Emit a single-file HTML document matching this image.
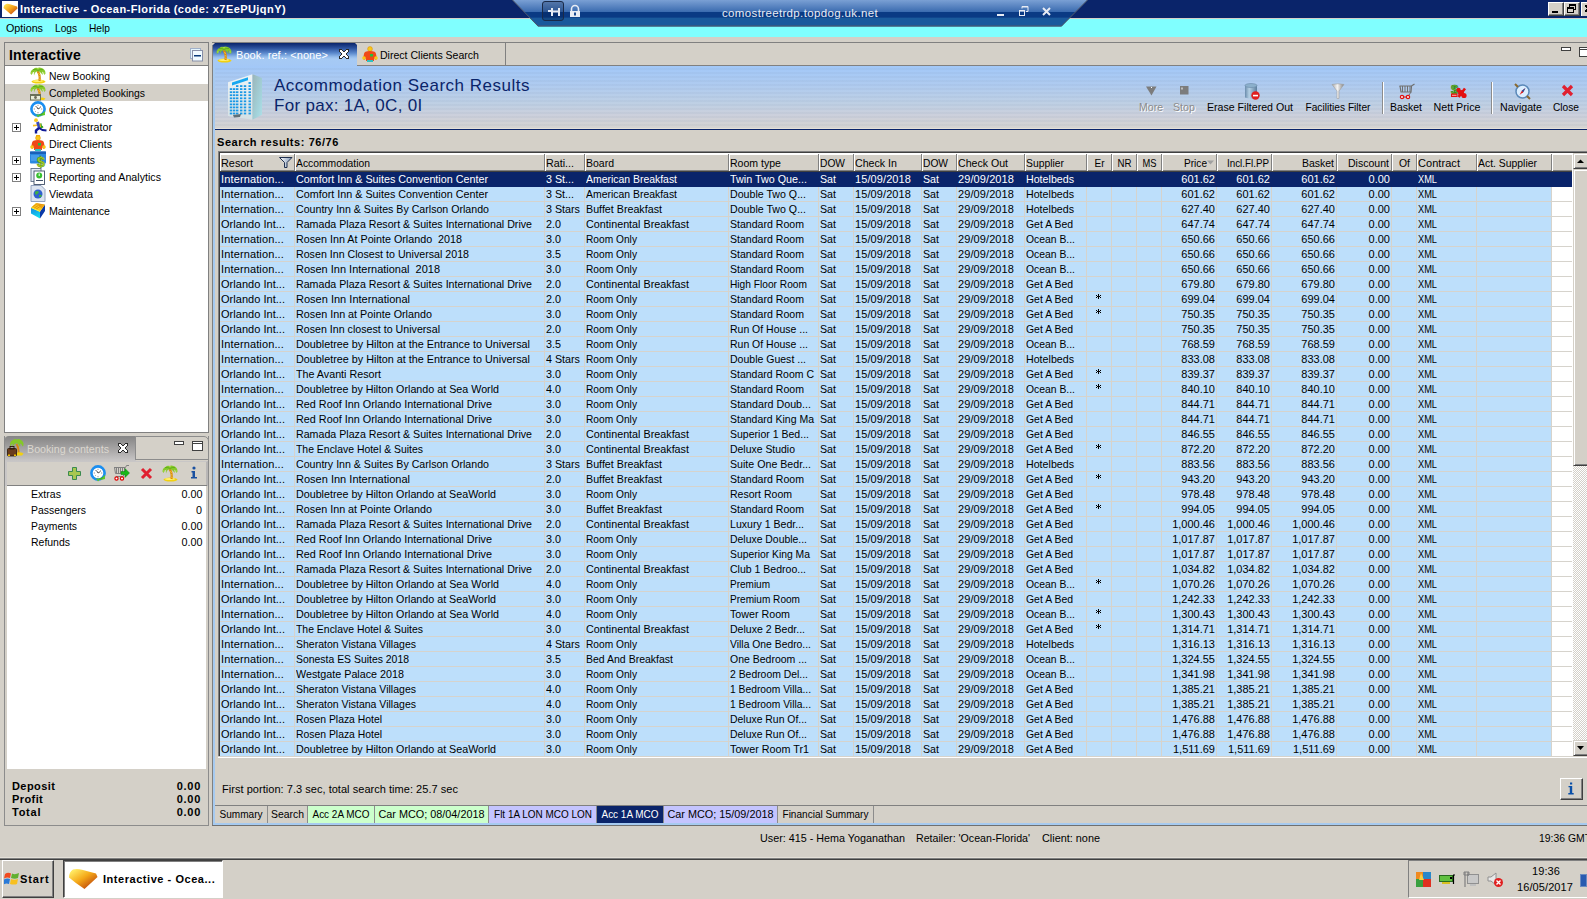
<!DOCTYPE html><html><head><meta charset="utf-8"><style>
*{margin:0;padding:0;box-sizing:border-box}
html,body{width:1587px;height:899px;overflow:hidden;background:#d4d0c8;font-family:"Liberation Sans",sans-serif;font-size:11px;line-height:12px;color:#000}
.a{position:absolute}
.t{position:absolute;white-space:nowrap;font-size:11px;line-height:12px}
.b{font-weight:bold}
</style></head><body><div class="a" style="left:0px;top:0px;width:1587px;height:18px;background:#0a246a"></div><div class="a" style="left:0px;top:18px;width:1587px;height:1px;background:#d4d0c8"></div><svg class="a" style="left:2px;top:1px" width="16" height="16"><rect x="0" y="0" width="16" height="16" fill="#fff"/><defs><linearGradient id="gi" x1="0.1" y1="0.1" x2="0.9" y2="0.9"><stop offset="0" stop-color="#ffe050"/><stop offset="0.5" stop-color="#f4a018"/><stop offset="1" stop-color="#c04410"/></linearGradient></defs><path d="M1.5 7 Q1.5 4 4 3 Q6 2.5 8 3.2 L15 5.5 L15.5 7.5 L9 13.5 Z" fill="url(#gi)"/></svg><div class="t b" style="left:20px;top:3px;color:#fff;letter-spacing:0.427px;">Interactive - Ocean-Florida (code: x7EePUjqnY)</div><div class="a" style="left:1548px;top:2px;width:16px;height:14px;background:#d4d0c8;border-top:1px solid #fff;border-left:1px solid #fff;border-right:1px solid #404040;border-bottom:1px solid #404040;box-shadow:inset -1px -1px #808080"></div><div class="a" style="left:1564px;top:2px;width:16px;height:14px;background:#d4d0c8;border-top:1px solid #fff;border-left:1px solid #fff;border-right:1px solid #404040;border-bottom:1px solid #404040;box-shadow:inset -1px -1px #808080"></div><div class="a" style="left:1552px;top:11px;width:6px;height:2px;background:#000"></div><svg class="a" style="left:1567px;top:4px" width="9" height="9"><rect x="2.5" y="0.5" width="6" height="5" fill="none" stroke="#000"/><rect x="2" y="0" width="7" height="2" fill="#000"/><rect x="0" y="3" width="7" height="6" fill="#d4d0c8"/><rect x="0.5" y="3.5" width="6" height="5" fill="none" stroke="#000"/><rect x="0" y="3" width="7" height="2" fill="#000"/></svg><div class="a" style="left:1581px;top:2px;width:6px;height:14px;background:#d4d0c8;border-top:1px solid #fff;border-left:1px solid #fff"></div><svg class="a" style="left:1585px;top:4px" width="2" height="9" shape-rendering="crispEdges"><rect x="0" y="1" width="2" height="2" fill="#000"/><rect x="1" y="3" width="1" height="1" fill="#000"/><rect x="1" y="5" width="1" height="1" fill="#000"/><rect x="0" y="6" width="2" height="2" fill="#000"/></svg><div class="a" style="left:0px;top:19px;width:1587px;height:18px;background:#80ffff"></div><div class="t " style="left:6px;top:22px;;transform:scaleX(0.9757);transform-origin:left 0;">Options</div><div class="t " style="left:55px;top:22px;;transform:scaleX(0.9221);transform-origin:left 0;">Logs</div><div class="t " style="left:89px;top:22px;;transform:scaleX(0.9282);transform-origin:left 0;">Help</div><svg class="a" style="left:0;top:0" width="1587" height="30"><defs><linearGradient id="rdp" x1="0" y1="0" x2="0" y2="1"><stop offset="0" stop-color="#7aa0d4"/><stop offset="0.44" stop-color="#3c6cb0"/><stop offset="0.455" stop-color="#0a3a84"/><stop offset="0.655" stop-color="#0a3a84"/><stop offset="0.67" stop-color="#1a5a9c"/><stop offset="1" stop-color="#1a5a9c"/></linearGradient></defs><path d="M512.5 0 L1087.5 0 L1061.5 26.5 L538 26.5 Z" fill="url(#rdp)"/><path d="M512.5 0 L538 26 L1061.5 26 L1087.5 0" fill="none" stroke="#505868" stroke-width="1"/><rect x="542.5" y="1.5" width="21" height="19" rx="2.5" fill="rgba(0,20,60,0.25)" stroke="#1a2a48" stroke-width="1"/><path d="M548 11h4M552 8v8M552 11.5h7M559 8v8" stroke="#e8ecf4" stroke-width="2" fill="none"/><path d="M571.5 11V9a3.5 3.5 0 0 1 7 0v2" stroke="#e8ecf4" stroke-width="1.6" fill="none"/><rect x="570" y="11" width="10" height="6" fill="#e8ecf4"/><rect x="574" y="12.5" width="2" height="3" fill="#1a4a90"/><rect x="997" y="14" width="7" height="2" fill="#e8ecf4"/><rect x="1019.5" y="10.5" width="5" height="5" fill="none" stroke="#e8ecf4" stroke-width="1"/><rect x="1019" y="10" width="6" height="1.5" fill="#e8ecf4"/><path d="M1022 8.5V6.5h6v5h-2" fill="none" stroke="#e8ecf4" stroke-width="1"/><rect x="1022" y="6" width="6" height="1.5" fill="#e8ecf4"/><path d="M1043 8l7 7M1050 8l-7 7" stroke="#e8ecf4" stroke-width="2"/></svg><div class="t " style="left:722px;top:7px;color:#e8ecf4;font-size:11.5px;line-height:13px;letter-spacing:0.355px;">comostreetrdp.topdog.uk.net</div><div class="a" style="left:4px;top:42px;width:205px;height:391px;background:#d4d0c8;border:1px solid #808080"></div><div class="t b" style="left:9px;top:48px;font-size:14px;line-height:14px;letter-spacing:0.178px;">Interactive</div><svg class="a" style="left:189px;top:47px" width="15" height="15" viewBox="0 0 15 15"><rect x="1.5" y="1.5" width="10" height="10" fill="#e4f4fc" stroke="#a0b0c8"/><rect x="3.5" y="3.5" width="10" height="10.5" fill="#f0faff" stroke="#8890a8"/><rect x="5" y="8" width="7" height="1.5" fill="#0a3a7a"/></svg><div class="a" style="left:5px;top:65px;width:203px;height:1px;background:#808080"></div><div class="a" style="left:5px;top:66px;width:203px;height:366px;background:#fff"></div><div class="a" style="left:5px;top:84px;width:203px;height:17px;background:#d4d0c8"></div><svg class="a" style="left:30px;top:67px" width="16" height="17" viewBox="0 0 16 17"><ellipse cx="8.5" cy="14.6" rx="7" ry="2" fill="#f2d010"/><ellipse cx="8" cy="14" rx="5" ry="1" fill="#fff070"/><path d="M7.5 4 Q10.5 8 9.5 14" stroke="#d88a10" stroke-width="2.2" fill="none"/><path d="M8 6.5 L10 7.5 M8.8 9.5 L10.3 10.2 M9 12 L10.5 12.5" stroke="#f8c830" stroke-width="0.9"/><path d="M0.5 6.5 Q0.5 3 3.5 2 Q5 0.3 7.5 1 Q9.5 0 11.5 1 Q15.5 2 15.5 6.5 L14.5 8 Q14 5 12 4.5 Q13 6.5 12.5 8 Q11 5 9 4.5 Q8 4 6 4.8 Q4.5 6 4 8.5 Q3.5 6 4.5 4.5 Q2 5 1.5 8Z" fill="#84c828"/><path d="M3 2.5 Q6 2 8 3.5 Q10 2 13 2.5" stroke="#5aa818" stroke-width="0.8" fill="none"/><circle cx="2" cy="6" r="0.8" fill="#b0e050"/><circle cx="14" cy="6" r="0.8" fill="#b0e050"/><circle cx="8" cy="1.5" r="0.8" fill="#b0e050"/></svg><div class="t " style="left:49px;top:70px;;transform:scaleX(0.9409);transform-origin:left 0;">New Booking</div><svg class="a" style="left:30px;top:84px" width="16" height="17" viewBox="0 0 16 17"><path d="M7.5 4 Q10.5 8 9.5 14" stroke="#d88a10" stroke-width="2.2" fill="none"/><path d="M8 6.5 L10 7.5 M8.8 9.5 L10.3 10.2 M9 12 L10.5 12.5" stroke="#f8c830" stroke-width="0.9"/><path d="M0.5 6.5 Q0.5 3 3.5 2 Q5 0.3 7.5 1 Q9.5 0 11.5 1 Q15.5 2 15.5 6.5 L14.5 8 Q14 5 12 4.5 Q13 6.5 12.5 8 Q11 5 9 4.5 Q8 4 6 4.8 Q4.5 6 4 8.5 Q3.5 6 4.5 4.5 Q2 5 1.5 8Z" fill="#84c828"/><path d="M3 2.5 Q6 2 8 3.5 Q10 2 13 2.5" stroke="#5aa818" stroke-width="0.8" fill="none"/><circle cx="2" cy="6" r="0.8" fill="#b0e050"/><circle cx="14" cy="6" r="0.8" fill="#b0e050"/><circle cx="8" cy="1.5" r="0.8" fill="#b0e050"/><path d="M9 14 Q12 13 15.5 14.5 L14 16 L9 16Z" fill="#f2d010"/><rect x="0.5" y="10.5" width="10" height="5.5" fill="#e8ecd8" stroke="#6a7058" stroke-width="1"/><rect x="0.5" y="10.5" width="10" height="1.5" fill="#6a7058"/><circle cx="5.5" cy="13.5" r="1.4" fill="#6a6a58"/></svg><div class="t " style="left:49px;top:87px;;transform:scaleX(0.9457);transform-origin:left 0;">Completed Bookings</div><svg class="a" style="left:30px;top:101px" width="16" height="17" viewBox="0 0 16 17"><circle cx="8" cy="8" r="6.6" fill="#fff" stroke="#1a8ef0" stroke-width="2.6"/><path d="M8 3.8v1M8 11.2v1M3.8 8h1M11.2 8h1M5 5l.6.6M11 5l-.6.6M5 11l.6-.6" stroke="#707070" stroke-width="0.9"/><path d="M8 8 L6.5 5.5 M8 8 L10.5 6.5" stroke="#505050" stroke-width="1"/><path d="M4 12.5 Q8 16 13 12 L14.8 9.5 L15 14 L11 15 L12.5 13.5 Q8 16.5 4 12.5Z" fill="#5cc828"/><path d="M5 12 Q8 15.5 13.5 11.5 L12 14 Q8 16 5 12Z" fill="#48b020"/><path d="M6.5 14 L8 16.5 L10 14.5Z" fill="#5cc828"/></svg><div class="t " style="left:49px;top:104px;;transform:scaleX(0.9604);transform-origin:left 0;">Quick Quotes</div><svg class="a" style="left:28px;top:117px" width="20" height="20" viewBox="0 0 20 20"><circle cx="8" cy="3.2" r="1.9" fill="#f8c820"/><path d="M5 8.6 L9 8.2" stroke="#f8c020" stroke-width="1.6"/><path d="M9.5 5 L11.5 11" stroke="#3a48b8" stroke-width="3"/><path d="M12.5 6.5 L13.2 10.5 L15 9.5" stroke="#30a020" stroke-width="2" fill="none"/><path d="M12 6.5 L12.5 10" stroke="#f0c020" stroke-width="1"/><path d="M11 11 L8 13.5 L8 16.5" stroke="#101a98" stroke-width="2.4" fill="none"/><path d="M11 11 L14.5 13 L18.5 13.5" stroke="#101a98" stroke-width="2" fill="none"/><rect x="8" y="18" width="4" height="2" fill="#f8b800"/></svg><div class="t " style="left:49px;top:121px;;transform:scaleX(0.9723);transform-origin:left 0;">Administrator</div><svg class="a" style="left:12px;top:123px" width="9" height="9" viewBox="0 0 9 9"><rect x="0.5" y="0.5" width="8" height="8" fill="#fff" stroke="#808080"/><path d="M2 4.5h5M4.5 2v5" stroke="#000"/></svg><svg class="a" style="left:30px;top:135px" width="16" height="17" viewBox="0 0 16 17"><circle cx="8" cy="3" r="2.4" fill="#f8c818" stroke="#e09010" stroke-width="0.6"/><path d="M2 8 Q2 5 8 5 Q14 5 14 8 L15 13 Q13 15 12 12 L12 15 H4 V12 Q3 15 1 13Z" fill="#f04818"/><circle cx="2" cy="12" r="1.8" fill="#f8c818"/><circle cx="14" cy="12" r="1.8" fill="#f8c818"/><rect x="8" y="8" width="3" height="2.5" fill="#20c040"/><rect x="5" y="14" width="6" height="2" fill="#30c0c0"/></svg><div class="t " style="left:49px;top:138px;;transform:scaleX(0.9632);transform-origin:left 0;">Direct Clients</div><svg class="a" style="left:30px;top:151px" width="17" height="17" viewBox="0 0 17 17"><rect x="0" y="0.5" width="16" height="12" rx="1" fill="#2a88e0"/><rect x="0" y="0.5" width="16" height="2.5" fill="#1a60b8"/><rect x="1" y="4" width="8" height="6" fill="#5aaaf0" opacity="0.6"/><text x="7" y="16" font-size="14" font-weight="bold" fill="#a8d828" stroke="#6a9a10" stroke-width="0.6" font-family="Liberation Sans">$</text></svg><div class="t " style="left:49px;top:154px;;transform:scaleX(0.9403);transform-origin:left 0;">Payments</div><svg class="a" style="left:12px;top:156px" width="9" height="9" viewBox="0 0 9 9"><rect x="0.5" y="0.5" width="8" height="8" fill="#fff" stroke="#808080"/><path d="M2 4.5h5M4.5 2v5" stroke="#000"/></svg><svg class="a" style="left:30px;top:168px" width="16" height="17" viewBox="0 0 16 17"><rect x="1" y="0.5" width="10" height="13" fill="#e8eef8" stroke="#607088" stroke-width="0.9"/><rect x="4" y="3" width="10.5" height="13.5" fill="#fff" stroke="#405068" stroke-width="0.9"/><circle cx="9.2" cy="7.5" r="3" fill="#3ac030"/><rect x="8.7" y="5.5" width="1" height="2.5" fill="#fff"/><rect x="6" y="12" width="7" height="1" fill="#405068"/></svg><div class="t " style="left:49px;top:171px;;transform:scaleX(0.9690);transform-origin:left 0;">Reporting and Analytics</div><svg class="a" style="left:12px;top:173px" width="9" height="9" viewBox="0 0 9 9"><rect x="0.5" y="0.5" width="8" height="8" fill="#fff" stroke="#808080"/><path d="M2 4.5h5M4.5 2v5" stroke="#000"/></svg><svg class="a" style="left:30px;top:185px" width="16" height="17" viewBox="0 0 16 17"><path d="M1 0.5 H11 L15 4.5 V16.5 H1Z" fill="#dce4f0" stroke="#8898b8" stroke-width="0.9"/><circle cx="8" cy="9" r="4.5" fill="#3060d0"/><path d="M5 7 Q7 5 9 7 Q8 9 6 10 Q5 9 5 7Z M9 10 Q11 9 12 11 Q10 13 9 12Z" fill="#40b040"/></svg><div class="t " style="left:49px;top:188px;;transform:scaleX(0.9764);transform-origin:left 0;">Viewdata</div><svg class="a" style="left:28px;top:201px" width="20" height="20" viewBox="0 0 20 20"><defs><linearGradient id="mb" x1="0" y1="0" x2="0.3" y2="1"><stop offset="0" stop-color="#1a80e0"/><stop offset="1" stop-color="#10d8f0"/></linearGradient></defs><path d="M3 6.5 L12 10.5 L12 17.5 L3 12.5Z" fill="url(#mb)"/><path d="M12 10.5 L17 3.5 L17 10 L12 17.5Z" fill="#0a3aa8"/><path d="M3 6.5 L8 2 L17 3.5 L12 10.5Z" fill="#f8c818"/><path d="M4.5 6 L9 2.8 L16.5 4.2M6 7.3 L10.5 4.2 L15.5 5.5M7.5 8.5 L12 5.5 L14.5 6.8" stroke="#e08010" stroke-width="0.8" fill="none"/><path d="M3 6.5 L12 10.5" stroke="#f8f040" stroke-width="1"/></svg><div class="t " style="left:49px;top:205px;;transform:scaleX(0.9683);transform-origin:left 0;">Maintenance</div><svg class="a" style="left:12px;top:207px" width="9" height="9" viewBox="0 0 9 9"><rect x="0.5" y="0.5" width="8" height="8" fill="#fff" stroke="#808080"/><path d="M2 4.5h5M4.5 2v5" stroke="#000"/></svg><div class="a" style="left:4px;top:436px;width:205px;height:390px;background:#d4d0c8;border:1px solid #8c8c8c;border-top:none"></div><div class="a" style="left:4px;top:436px;width:132px;height:25px;border-radius:5px 0 0 0;background:linear-gradient(#858585,#a8a6a6 55%,#c8c6c6);border-left:1px solid #8c8c8c"></div><div class="a" style="left:135px;top:436px;width:74px;height:24px;border-radius:0 5px 0 0;background:#d4d0c8;border:1px solid #8c8c8c;border-bottom:1px solid #8c8c8c"></div><div class="a" style="left:135px;top:459px;width:74px;height:1px;background:#8c8c8c"></div><svg class="a" style="left:7px;top:438px" width="17" height="19" viewBox="0 0 17 19"><path d="M9.5 6 Q12 10 11.5 16" stroke="#d88a10" stroke-width="2" fill="none"/><path d="M3 7 Q3 3 6 2 Q8 0.5 10 1.5 Q12 0.5 14 2 Q17 3.5 16.5 7.5 L15.5 8.5 Q15 6 13 5.5 Q13.5 7.5 13 9 Q12 6 10.5 5.5 Q9 5 7.5 6 Q6 7.5 5.5 9.5 Q5 7 6 5.5 Q4 6 3.5 8.5Z" fill="#84c828"/><path d="M9 15 Q13 13.5 16.5 15.5 L15 17.5 L9 17.5Z" fill="#f2d010"/><rect x="0.5" y="10.5" width="9" height="7.5" rx="1" fill="#6a3c1c" stroke="#2a1808" stroke-width="0.8"/><rect x="3" y="8.5" width="4" height="2.5" fill="none" stroke="#2a1808" stroke-width="0.9"/><rect x="1" y="16.5" width="2" height="1.5" fill="#f0c000"/><rect x="7" y="16.5" width="2" height="1.5" fill="#f0c000"/></svg><div class="t " style="left:27px;top:443px;color:#dcd8d0;transform:scaleX(0.9717);transform-origin:left 0;">Booking contents</div><svg class="a" style="left:118px;top:443px" width="10" height="10" shape-rendering="crispEdges"><rect x="0" y="0" width="3" height="1" fill="#2a2a2a"/><rect x="7" y="0" width="3" height="1" fill="#2a2a2a"/><rect x="0" y="1" width="1" height="1" fill="#2a2a2a"/><rect x="1" y="1" width="2" height="1" fill="#fff"/><rect x="3" y="1" width="1" height="1" fill="#2a2a2a"/><rect x="6" y="1" width="1" height="1" fill="#2a2a2a"/><rect x="7" y="1" width="2" height="1" fill="#fff"/><rect x="9" y="1" width="1" height="1" fill="#2a2a2a"/><rect x="0" y="2" width="1" height="1" fill="#2a2a2a"/><rect x="1" y="2" width="3" height="1" fill="#fff"/><rect x="4" y="2" width="2" height="1" fill="#2a2a2a"/><rect x="6" y="2" width="3" height="1" fill="#fff"/><rect x="9" y="2" width="1" height="1" fill="#2a2a2a"/><rect x="1" y="3" width="1" height="1" fill="#2a2a2a"/><rect x="2" y="3" width="6" height="1" fill="#fff"/><rect x="8" y="3" width="1" height="1" fill="#2a2a2a"/><rect x="2" y="4" width="1" height="1" fill="#2a2a2a"/><rect x="3" y="4" width="4" height="1" fill="#fff"/><rect x="7" y="4" width="1" height="1" fill="#2a2a2a"/><rect x="2" y="5" width="1" height="1" fill="#2a2a2a"/><rect x="3" y="5" width="4" height="1" fill="#fff"/><rect x="7" y="5" width="1" height="1" fill="#2a2a2a"/><rect x="1" y="6" width="1" height="1" fill="#2a2a2a"/><rect x="2" y="6" width="6" height="1" fill="#fff"/><rect x="8" y="6" width="1" height="1" fill="#2a2a2a"/><rect x="0" y="7" width="1" height="1" fill="#2a2a2a"/><rect x="1" y="7" width="3" height="1" fill="#fff"/><rect x="4" y="7" width="2" height="1" fill="#2a2a2a"/><rect x="6" y="7" width="3" height="1" fill="#fff"/><rect x="9" y="7" width="1" height="1" fill="#2a2a2a"/><rect x="0" y="8" width="1" height="1" fill="#2a2a2a"/><rect x="1" y="8" width="2" height="1" fill="#fff"/><rect x="3" y="8" width="1" height="1" fill="#2a2a2a"/><rect x="6" y="8" width="1" height="1" fill="#2a2a2a"/><rect x="7" y="8" width="2" height="1" fill="#fff"/><rect x="9" y="8" width="1" height="1" fill="#2a2a2a"/><rect x="0" y="9" width="3" height="1" fill="#2a2a2a"/><rect x="7" y="9" width="3" height="1" fill="#2a2a2a"/></svg><svg class="a" style="left:174px;top:441px" width="10" height="4" viewBox="0 0 10 4"><rect x="0.5" y="0.5" width="9" height="3" fill="#fff" stroke="#404040"/></svg><svg class="a" style="left:192px;top:441px" width="11" height="10" viewBox="0 0 11 10"><rect x="0.5" y="0.5" width="10" height="9" fill="#fff" stroke="#404040"/><rect x="0" y="2" width="11" height="1" fill="#404040"/></svg><div class="a" style="left:5px;top:461px;width:203px;height:25px;background:#d4d0c8;border-left:2px solid #c8c6c6;border-top:1px solid #c8c6c6;border-right:2px solid #b8b6b6"></div><div class="a" style="left:7px;top:485px;width:200px;height:1px;background:#808080"></div><svg class="a" style="left:68px;top:467px" width="13" height="13" viewBox="0 0 13 13"><path d="M4.5 0.5h4v4h4v4h-4v4h-4v-4h-4v-4h4z" fill="#a8c850" stroke="#3a8a50" stroke-width="1"/></svg><svg class="a" style="left:90px;top:465px" width="16" height="17" viewBox="0 0 16 17"><circle cx="8" cy="8" r="6.6" fill="#fff" stroke="#1a8ef0" stroke-width="2.6"/><path d="M8 3.8v1M8 11.2v1M3.8 8h1M11.2 8h1M5 5l.6.6M11 5l-.6.6M5 11l.6-.6" stroke="#707070" stroke-width="0.9"/><path d="M8 8 L6.5 5.5 M8 8 L10.5 6.5" stroke="#505050" stroke-width="1"/><path d="M4 12.5 Q8 16 13 12 L14.8 9.5 L15 14 L11 15 L12.5 13.5 Q8 16.5 4 12.5Z" fill="#5cc828"/><path d="M5 12 Q8 15.5 13.5 11.5 L12 14 Q8 16 5 12Z" fill="#48b020"/><path d="M6.5 14 L8 16.5 L10 14.5Z" fill="#5cc828"/></svg><svg class="a" style="left:113px;top:464px" width="17" height="17" viewBox="0 0 17 17"><path d="M1 3.5H12.5L13.5 1.5H16" stroke="#808080" stroke-width="1" fill="none"/><path d="M1.5 3.5L2.5 9.5H11.5" stroke="#808080" stroke-width="1" fill="none"/><path d="M3.5 3.5v6M5.5 3.5v6M7.5 3.5v6M9.5 3.5v6M11.5 3.5v6" stroke="#808080" stroke-width="1"/><path d="M11.5 9.5L10 12.5H3" stroke="#808080" fill="none"/><circle cx="3.5" cy="14.5" r="1.6" fill="#fff" stroke="#e00000" stroke-width="1.2"/><circle cx="9" cy="14.5" r="1.6" fill="#fff" stroke="#e00000" stroke-width="1.2"/><path d="M8 7.5h4v-3l4.5 4.5-4.5 4.5v-3H8z" fill="#18b818" stroke="#0a800a" stroke-width="0.5"/></svg><svg class="a" style="left:140px;top:467px" width="13" height="13" viewBox="0 0 13 13"><path d="M2 2l9 9M11 2l-9 9" stroke="#e02030" stroke-width="3"/></svg><svg class="a" style="left:162px;top:465px" width="16" height="17" viewBox="0 0 16 17"><ellipse cx="8.5" cy="14.6" rx="7" ry="2" fill="#f2d010"/><ellipse cx="8" cy="14" rx="5" ry="1" fill="#fff070"/><path d="M7.5 4 Q10.5 8 9.5 14" stroke="#d88a10" stroke-width="2.2" fill="none"/><path d="M8 6.5 L10 7.5 M8.8 9.5 L10.3 10.2 M9 12 L10.5 12.5" stroke="#f8c830" stroke-width="0.9"/><path d="M0.5 6.5 Q0.5 3 3.5 2 Q5 0.3 7.5 1 Q9.5 0 11.5 1 Q15.5 2 15.5 6.5 L14.5 8 Q14 5 12 4.5 Q13 6.5 12.5 8 Q11 5 9 4.5 Q8 4 6 4.8 Q4.5 6 4 8.5 Q3.5 6 4.5 4.5 Q2 5 1.5 8Z" fill="#84c828"/><path d="M3 2.5 Q6 2 8 3.5 Q10 2 13 2.5" stroke="#5aa818" stroke-width="0.8" fill="none"/><circle cx="2" cy="6" r="0.8" fill="#b0e050"/><circle cx="14" cy="6" r="0.8" fill="#b0e050"/><circle cx="8" cy="1.5" r="0.8" fill="#b0e050"/></svg><svg class="a" style="left:190px;top:466px" width="8" height="13" viewBox="0 0 8 13"><circle cx="4" cy="2" r="1.6" fill="#1a50a0"/><path d="M1.5 5h3.5v6h2v1.5h-6V11h1.5V6.5h-1z" fill="#1a50a0"/></svg><div class="a" style="left:7px;top:486px;width:199px;height:283px;background:#fff"></div><div class="t " style="left:31px;top:488px;;transform:scaleX(0.9619);transform-origin:left 0;">Extras</div><div class="t " style="right:1385px;top:488px;text-align:right;;transform:scaleX(0.9803);transform-origin:right 0;">0.00</div><div class="t " style="left:31px;top:504px;;transform:scaleX(0.9467);transform-origin:left 0;">Passengers</div><div class="t " style="right:1385px;top:504px;text-align:right;;transform:scaleX(0.9796);transform-origin:right 0;">0</div><div class="t " style="left:31px;top:520px;;transform:scaleX(0.9403);transform-origin:left 0;">Payments</div><div class="t " style="right:1385px;top:520px;text-align:right;;transform:scaleX(0.9803);transform-origin:right 0;">0.00</div><div class="t " style="left:31px;top:536px;;transform:scaleX(0.9516);transform-origin:left 0;">Refunds</div><div class="t " style="right:1385px;top:536px;text-align:right;;transform:scaleX(0.9803);transform-origin:right 0;">0.00</div><div class="t b" style="left:12px;top:780px;;letter-spacing:0.422px;">Deposit</div><div class="t b" style="right:1386px;top:780px;text-align:right;;letter-spacing:0.720px;">0.00</div><div class="t b" style="left:12px;top:793px;;letter-spacing:0.411px;">Profit</div><div class="t b" style="right:1386px;top:793px;text-align:right;;letter-spacing:0.720px;">0.00</div><div class="t b" style="left:12px;top:806px;;letter-spacing:0.746px;">Total</div><div class="t b" style="right:1386px;top:806px;text-align:right;;letter-spacing:0.720px;">0.00</div><div class="a" style="left:212px;top:42px;width:1375px;height:1px;background:#808080"></div><div class="a" style="left:212px;top:43px;width:1375px;height:23px;background:#d4d0c8"></div><div class="a" style="left:505px;top:65px;width:1082px;height:1px;background:#808080"></div><div class="a" style="left:356px;top:43px;width:150px;height:23px;background:#d4d0c8;border-right:1px solid #808080;border-bottom:1px solid #808080"></div><svg class="a" style="left:362px;top:46px" width="16" height="17" viewBox="0 0 16 17"><circle cx="8" cy="3" r="2.4" fill="#f8c818" stroke="#e09010" stroke-width="0.6"/><path d="M2 8 Q2 5 8 5 Q14 5 14 8 L15 13 Q13 15 12 12 L12 15 H4 V12 Q3 15 1 13Z" fill="#f04818"/><circle cx="2" cy="12" r="1.8" fill="#f8c818"/><circle cx="14" cy="12" r="1.8" fill="#f8c818"/><rect x="8" y="8" width="3" height="2.5" fill="#20c040"/><rect x="5" y="14" width="6" height="2" fill="#30c0c0"/></svg><div class="t " style="left:380px;top:49px;;transform:scaleX(0.9581);transform-origin:left 0;">Direct Clients Search</div><svg class="a" style="left:1561px;top:47px" width="10" height="4" viewBox="0 0 10 4"><rect x="0.5" y="0.5" width="9" height="3" fill="#fff" stroke="#404040"/></svg><svg class="a" style="left:1579px;top:47px" width="8" height="10" viewBox="0 0 8 10"><rect x="0.5" y="0.5" width="10" height="9" fill="#fff" stroke="#404040"/><rect x="0" y="2" width="11" height="1" fill="#404040"/></svg><div class="a" style="left:212px;top:43px;width:145px;height:23px;clip-path:polygon(0 3px,3px 0,calc(100% - 2px) 0,100% 2px,100% 100%,0 100%);background:linear-gradient(90deg,#808080 0,#808080 1px,transparent 1px),linear-gradient(#0a246a 0px,#2a509c 5px,#5a88cc 10px,#94bcec 14px,#a6caf4 16px,#a4c8f6 23px)"></div><svg class="a" style="left:216px;top:46px" width="16" height="17" viewBox="0 0 16 17"><ellipse cx="8.5" cy="14.6" rx="7" ry="2" fill="#f2d010"/><ellipse cx="8" cy="14" rx="5" ry="1" fill="#fff070"/><path d="M7.5 4 Q10.5 8 9.5 14" stroke="#d88a10" stroke-width="2.2" fill="none"/><path d="M8 6.5 L10 7.5 M8.8 9.5 L10.3 10.2 M9 12 L10.5 12.5" stroke="#f8c830" stroke-width="0.9"/><path d="M0.5 6.5 Q0.5 3 3.5 2 Q5 0.3 7.5 1 Q9.5 0 11.5 1 Q15.5 2 15.5 6.5 L14.5 8 Q14 5 12 4.5 Q13 6.5 12.5 8 Q11 5 9 4.5 Q8 4 6 4.8 Q4.5 6 4 8.5 Q3.5 6 4.5 4.5 Q2 5 1.5 8Z" fill="#84c828"/><path d="M3 2.5 Q6 2 8 3.5 Q10 2 13 2.5" stroke="#5aa818" stroke-width="0.8" fill="none"/><circle cx="2" cy="6" r="0.8" fill="#b0e050"/><circle cx="14" cy="6" r="0.8" fill="#b0e050"/><circle cx="8" cy="1.5" r="0.8" fill="#b0e050"/></svg><div class="t " style="left:236px;top:49px;color:#fff;letter-spacing:0.082px;">Book. ref.: &lt;none&gt;</div><svg class="a" style="left:339px;top:49px" width="10" height="10" shape-rendering="crispEdges"><rect x="0" y="0" width="3" height="1" fill="#2a2a2a"/><rect x="7" y="0" width="3" height="1" fill="#2a2a2a"/><rect x="0" y="1" width="1" height="1" fill="#2a2a2a"/><rect x="1" y="1" width="2" height="1" fill="#fff"/><rect x="3" y="1" width="1" height="1" fill="#2a2a2a"/><rect x="6" y="1" width="1" height="1" fill="#2a2a2a"/><rect x="7" y="1" width="2" height="1" fill="#fff"/><rect x="9" y="1" width="1" height="1" fill="#2a2a2a"/><rect x="0" y="2" width="1" height="1" fill="#2a2a2a"/><rect x="1" y="2" width="3" height="1" fill="#fff"/><rect x="4" y="2" width="2" height="1" fill="#2a2a2a"/><rect x="6" y="2" width="3" height="1" fill="#fff"/><rect x="9" y="2" width="1" height="1" fill="#2a2a2a"/><rect x="1" y="3" width="1" height="1" fill="#2a2a2a"/><rect x="2" y="3" width="6" height="1" fill="#fff"/><rect x="8" y="3" width="1" height="1" fill="#2a2a2a"/><rect x="2" y="4" width="1" height="1" fill="#2a2a2a"/><rect x="3" y="4" width="4" height="1" fill="#fff"/><rect x="7" y="4" width="1" height="1" fill="#2a2a2a"/><rect x="2" y="5" width="1" height="1" fill="#2a2a2a"/><rect x="3" y="5" width="4" height="1" fill="#fff"/><rect x="7" y="5" width="1" height="1" fill="#2a2a2a"/><rect x="1" y="6" width="1" height="1" fill="#2a2a2a"/><rect x="2" y="6" width="6" height="1" fill="#fff"/><rect x="8" y="6" width="1" height="1" fill="#2a2a2a"/><rect x="0" y="7" width="1" height="1" fill="#2a2a2a"/><rect x="1" y="7" width="3" height="1" fill="#fff"/><rect x="4" y="7" width="2" height="1" fill="#2a2a2a"/><rect x="6" y="7" width="3" height="1" fill="#fff"/><rect x="9" y="7" width="1" height="1" fill="#2a2a2a"/><rect x="0" y="8" width="1" height="1" fill="#2a2a2a"/><rect x="1" y="8" width="2" height="1" fill="#fff"/><rect x="3" y="8" width="1" height="1" fill="#2a2a2a"/><rect x="6" y="8" width="1" height="1" fill="#2a2a2a"/><rect x="7" y="8" width="2" height="1" fill="#fff"/><rect x="9" y="8" width="1" height="1" fill="#2a2a2a"/><rect x="0" y="9" width="3" height="1" fill="#2a2a2a"/><rect x="7" y="9" width="3" height="1" fill="#2a2a2a"/></svg><div class="a" style="left:212px;top:46px;width:1px;height:780px;background:#808080"></div><div class="a" style="left:213px;top:66px;width:2px;height:759px;background:#a6caf0"></div><div class="a" style="left:215px;top:66px;width:1372px;height:63px;background:repeating-linear-gradient(rgba(255,255,255,0) 0px,rgba(255,255,255,0) 2px,rgba(110,130,160,0.07) 2px,rgba(110,130,160,0.07) 4px),linear-gradient(#a2c8f8 0%,#afcbf0 30%,#bfd0e4 60%,#ccd0dc 78%,#d6d4d0 100%)"></div><div class="a" style="left:215px;top:128px;width:1372px;height:1px;background:#e4e0d8"></div><div class="a" style="left:215px;top:129px;width:1372px;height:1px;background:#0a246a"></div><svg class="a" style="left:227px;top:73px" width="36" height="48" viewBox="0 0 36 48"><defs><linearGradient id="bld" x1="0" x2="0" y1="0" y2="1"><stop offset="0" stop-color="#eef4f6"/><stop offset="1" stop-color="#d4e0e4"/></linearGradient><linearGradient id="bld2" x1="0" x2="1" y1="0" y2="1"><stop offset="0" stop-color="#9ab4b8"/><stop offset="0.7" stop-color="#a4d4dc"/><stop offset="1" stop-color="#b0e0e8"/></linearGradient></defs><path d="M1 9.3 L25.5 1.2 L25.5 46.7 L1 43Z" fill="url(#bld)"/><path d="M25.5 1.2 L35 5 L35 41.7 L25.5 46.7Z" fill="url(#bld2)"/><path d="M5 9.5 L21 4.2 L21 7.2 L5 12.5Z" fill="#18a8f0"/><rect x="2.8" y="39.6" width="2.4" height="1.8" fill="#1a98e6"/><rect x="2.8" y="36.6" width="2.4" height="1.8" fill="#1a98e6"/><rect x="2.8" y="33.5" width="2.4" height="1.8" fill="#1a98e6"/><rect x="2.8" y="30.5" width="2.4" height="1.8" fill="#1a98e6"/><rect x="2.8" y="27.4" width="2.4" height="1.8" fill="#1a98e6"/><rect x="2.8" y="24.4" width="2.4" height="1.8" fill="#1a98e6"/><rect x="2.8" y="21.3" width="2.4" height="1.8" fill="#1a98e6"/><rect x="2.8" y="18.3" width="2.4" height="1.8" fill="#1a98e6"/><rect x="2.8" y="15.2" width="2.4" height="1.8" fill="#1a98e6"/><rect x="5.9" y="39.6" width="2.4" height="1.8" fill="#1a98e6"/><rect x="5.9" y="36.6" width="2.4" height="1.8" fill="#1a98e6"/><rect x="5.9" y="33.5" width="2.4" height="1.8" fill="#1a98e6"/><rect x="5.9" y="30.5" width="2.4" height="1.8" fill="#1a98e6"/><rect x="5.9" y="27.4" width="2.4" height="1.8" fill="#1a98e6"/><rect x="5.9" y="24.4" width="2.4" height="1.8" fill="#1a98e6"/><rect x="5.9" y="21.3" width="2.4" height="1.8" fill="#1a98e6"/><rect x="5.9" y="18.3" width="2.4" height="1.8" fill="#1a98e6"/><rect x="5.9" y="15.2" width="2.4" height="1.8" fill="#1a98e6"/><rect x="9.0" y="39.6" width="2.4" height="1.8" fill="#1a98e6"/><rect x="9.0" y="36.6" width="2.4" height="1.8" fill="#1a98e6"/><rect x="9.0" y="33.5" width="2.4" height="1.8" fill="#1a98e6"/><rect x="9.0" y="30.5" width="2.4" height="1.8" fill="#1a98e6"/><rect x="9.0" y="27.4" width="2.4" height="1.8" fill="#1a98e6"/><rect x="9.0" y="24.4" width="2.4" height="1.8" fill="#1a98e6"/><rect x="9.0" y="21.3" width="2.4" height="1.8" fill="#1a98e6"/><rect x="9.0" y="18.3" width="2.4" height="1.8" fill="#1a98e6"/><rect x="9.0" y="15.2" width="2.4" height="1.8" fill="#1a98e6"/><rect x="9.0" y="12.2" width="2.4" height="1.8" fill="#1a98e6"/><rect x="13.0" y="39.6" width="2.4" height="1.8" fill="#1a98e6"/><rect x="13.0" y="36.6" width="2.4" height="1.8" fill="#1a98e6"/><rect x="13.0" y="33.5" width="2.4" height="1.8" fill="#1a98e6"/><rect x="13.0" y="30.5" width="2.4" height="1.8" fill="#1a98e6"/><rect x="13.0" y="27.4" width="2.4" height="1.8" fill="#1a98e6"/><rect x="13.0" y="24.4" width="2.4" height="1.8" fill="#1a98e6"/><rect x="13.0" y="21.3" width="2.4" height="1.8" fill="#1a98e6"/><rect x="13.0" y="18.3" width="2.4" height="1.8" fill="#1a98e6"/><rect x="13.0" y="15.2" width="2.4" height="1.8" fill="#1a98e6"/><rect x="13.0" y="12.2" width="2.4" height="1.8" fill="#1a98e6"/><rect x="16.8" y="39.6" width="2.4" height="1.8" fill="#1a98e6"/><rect x="16.8" y="36.6" width="2.4" height="1.8" fill="#1a98e6"/><rect x="16.8" y="33.5" width="2.4" height="1.8" fill="#1a98e6"/><rect x="16.8" y="30.5" width="2.4" height="1.8" fill="#1a98e6"/><rect x="16.8" y="27.4" width="2.4" height="1.8" fill="#1a98e6"/><rect x="16.8" y="24.4" width="2.4" height="1.8" fill="#1a98e6"/><rect x="16.8" y="21.3" width="2.4" height="1.8" fill="#1a98e6"/><rect x="16.8" y="18.3" width="2.4" height="1.8" fill="#1a98e6"/><rect x="16.8" y="15.2" width="2.4" height="1.8" fill="#1a98e6"/><rect x="16.8" y="12.2" width="2.4" height="1.8" fill="#1a98e6"/><rect x="21.5" y="39.6" width="2.4" height="1.8" fill="#1a98e6"/><rect x="21.5" y="36.6" width="2.4" height="1.8" fill="#1a98e6"/><rect x="21.5" y="33.5" width="2.4" height="1.8" fill="#1a98e6"/><rect x="21.5" y="30.5" width="2.4" height="1.8" fill="#1a98e6"/><rect x="21.5" y="27.4" width="2.4" height="1.8" fill="#1a98e6"/><rect x="21.5" y="24.4" width="2.4" height="1.8" fill="#1a98e6"/><rect x="21.5" y="21.3" width="2.4" height="1.8" fill="#1a98e6"/><rect x="21.5" y="18.3" width="2.4" height="1.8" fill="#1a98e6"/><rect x="21.5" y="15.2" width="2.4" height="1.8" fill="#1a98e6"/><rect x="21.5" y="12.2" width="2.4" height="1.8" fill="#1a98e6"/><rect x="21.5" y="9.1" width="2.4" height="1.8" fill="#1a98e6"/><path d="M6 42 L14 41 L13 44 L7 44.5Z" fill="#607078"/></svg><div class="t " style="left:274px;top:77px;font-size:17px;line-height:18px;color:#0a246a;letter-spacing:0.504px;">Accommodation Search Results</div><div class="t " style="left:274px;top:97px;font-size:17px;line-height:18px;color:#0a246a;letter-spacing:0.306px;">For pax: 1A, 0C, 0I</div><div class="t" style="left:1091px;width:120px;top:101px;text-align:center;color:#8c8c8c;text-shadow:1px 1px 0 #fff;transform:scaleX(0.9576);transform-origin:center 0">More</div><div class="t" style="left:1124px;width:120px;top:101px;text-align:center;color:#8c8c8c;text-shadow:1px 1px 0 #fff;transform:scaleX(0.9717);transform-origin:center 0">Stop</div><div class="t" style="left:1190px;width:120px;top:101px;text-align:center;transform:scaleX(0.9634);transform-origin:center 0">Erase Filtered Out</div><div class="t" style="left:1278px;width:120px;top:101px;text-align:center;transform:scaleX(0.9246);transform-origin:center 0">Facilities Filter</div><div class="t" style="left:1346px;width:120px;top:101px;text-align:center;transform:scaleX(0.9512);transform-origin:center 0">Basket</div><div class="t" style="left:1397px;width:120px;top:101px;text-align:center;transform:scaleX(0.9731);transform-origin:center 0">Nett Price</div><div class="t" style="left:1461px;width:120px;top:101px;text-align:center;transform:scaleX(0.9673);transform-origin:center 0">Navigate</div><div class="t" style="left:1506px;width:120px;top:101px;text-align:center;transform:scaleX(0.9244);transform-origin:center 0">Close</div><svg class="a" style="left:1146px;top:86px" width="11" height="10" viewBox="0 0 11 10"><path d="M0 0.5h10.5L5.5 9.5z" fill="#7c7c7c"/><rect x="5" y="1" width="1" height="1" fill="#fff"/></svg><svg class="a" style="left:1180px;top:86px" width="9" height="9" viewBox="0 0 9 9"><rect x="0" y="0" width="8.5" height="8.5" fill="#7c7c7c"/><rect x="1.5" y="1.5" width="1" height="2" fill="#fff"/></svg><svg class="a" style="left:1244px;top:83px" width="16" height="17" viewBox="0 0 16 17"><defs><linearGradient id="can" x1="0" x2="1"><stop offset="0" stop-color="#6a8cac"/><stop offset="0.35" stop-color="#b4d0e4"/><stop offset="1" stop-color="#5c7e9e"/></linearGradient></defs><path d="M1 2.5 V14.5 Q7 16.5 13 14.5 V2.5Z" fill="url(#can)"/><ellipse cx="7" cy="2.5" rx="6" ry="2" fill="#8cb0cc" stroke="#6a8aa8" stroke-width="0.6"/><circle cx="11.5" cy="12.5" r="4.2" fill="#e02020"/><rect x="9" y="11.8" width="5" height="1.6" fill="#fff"/></svg><svg class="a" style="left:1331px;top:83px" width="14" height="17" viewBox="0 0 14 17"><defs><linearGradient id="fun" x1="0" x2="1"><stop offset="0" stop-color="#a8a8a8"/><stop offset="0.45" stop-color="#f4f4f4"/><stop offset="1" stop-color="#808080"/></linearGradient></defs><path d="M1 1.5 Q7 0 13 1.5 L8 8 V15.5 H6 V8Z" fill="url(#fun)" stroke="#a0a0a0" stroke-width="0.6"/></svg><div class="a" style="left:1382px;top:82px;width:1px;height:32px;background:#8c8c8c;box-shadow:1px 0 #fff"></div><div class="a" style="left:1491px;top:82px;width:1px;height:32px;background:#8c8c8c;box-shadow:1px 0 #fff"></div><svg class="a" style="left:1399px;top:83px" width="16" height="17" viewBox="0 0 16 17"><path d="M0.5 3 H12.5 L15.5 1" stroke="#707070" fill="none" stroke-width="1.2"/><path d="M1 3 L2 9 H12 L12.5 3" stroke="#707070" fill="none" stroke-width="1.2"/><path d="M3.5 3v6M6 3v6M8.5 3v6M11 3v6" stroke="#707070" stroke-width="1"/><path d="M12 9 L10 12" stroke="#707070"/><circle cx="3" cy="14" r="1.6" fill="#fff" stroke="#e01010" stroke-width="1.3"/><circle cx="9" cy="14" r="1.6" fill="#fff" stroke="#e01010" stroke-width="1.3"/><path d="M4.6 14h2.8" stroke="#e01010"/></svg><svg class="a" style="left:1450px;top:82px" width="17" height="17" viewBox="0 0 17 17"><text x="1" y="11.5" font-size="13" font-weight="bold" fill="#6ab838" stroke="#3a8a18" stroke-width="0.7" font-family="Liberation Sans">$</text><circle cx="8.5" cy="8" r="2.2" fill="#e41010"/><circle cx="14" cy="13.5" r="2.6" fill="#e41010"/><path d="M15 6.5 L8.5 15" stroke="#e41010" stroke-width="2.6"/><circle cx="11" cy="11" r="3" fill="#e41010"/><rect x="1" y="11.5" width="6.5" height="3.5" fill="#e41010"/><rect x="2" y="12.8" width="4.5" height="1" fill="#ffb0b0"/></svg><svg class="a" style="left:1514px;top:83px" width="17" height="17" viewBox="0 0 17 17"><circle cx="8.5" cy="8.5" r="6.5" fill="#dceeff" stroke="#5a88b8" stroke-width="1.5"/><path d="M11.5 5 L9.2 9.2 L5.5 12 L7.8 7.8Z" fill="#e02020"/><path d="M11.5 5 L7.8 7.8 L9.2 9.2Z" fill="#2050a0"/><path d="M1 1 L4 4 M13 13 L16 16" stroke="#8a6a30" stroke-width="2"/></svg><svg class="a" style="left:1561px;top:84px" width="13" height="13" viewBox="0 0 13 13"><path d="M2 2l9 9M11 2l-9 9" stroke="#e02030" stroke-width="3.2"/></svg><div class="t b" style="left:217px;top:136px;;letter-spacing:0.568px;">Search results: 76/76</div><div class="a" style="left:218px;top:151px;width:1369px;height:1px;background:#808080"></div><div class="a" style="left:218px;top:152px;width:1369px;height:1px;background:#404040"></div><div class="a" style="left:218px;top:151px;width:1px;height:606px;background:#808080"></div><div class="a" style="left:219px;top:152px;width:1px;height:604px;background:#404040"></div><div class="a" style="left:218px;top:756px;width:1369px;height:1px;background:#d4d0c8"></div><div class="a" style="left:218px;top:757px;width:1369px;height:1px;background:#fff"></div><div class="a" style="left:220px;top:153px;width:1353px;height:19px;background:#d4d0c8"></div><div class="a" style="left:220px;top:153px;width:1353px;height:2px;background:#fff"></div><div class="a" style="left:220px;top:170px;width:1353px;height:1px;background:#808080"></div><div class="a" style="left:220px;top:171px;width:1353px;height:1px;background:#404040"></div><div class="a" style="left:220px;top:153px;width:1px;height:18px;background:#fff"></div><div class="a" style="left:294px;top:154px;width:1px;height:17px;background:#808080"></div><div class="t" style="left:221px;top:157px;transform:scaleX(0.9875);transform-origin:left 0">Resort</div><div class="a" style="left:295px;top:153px;width:1px;height:18px;background:#fff"></div><div class="a" style="left:544px;top:154px;width:1px;height:17px;background:#808080"></div><div class="t" style="left:296px;top:157px;transform:scaleX(0.9382);transform-origin:left 0">Accommodation</div><div class="a" style="left:545px;top:153px;width:1px;height:18px;background:#fff"></div><div class="a" style="left:584px;top:154px;width:1px;height:17px;background:#808080"></div><div class="t" style="left:546px;top:157px;transform:scaleX(0.9744);transform-origin:left 0">Rati...</div><div class="a" style="left:585px;top:153px;width:1px;height:18px;background:#fff"></div><div class="a" style="left:728px;top:154px;width:1px;height:17px;background:#808080"></div><div class="t" style="left:586px;top:157px;transform:scaleX(0.9537);transform-origin:left 0">Board</div><div class="a" style="left:729px;top:153px;width:1px;height:18px;background:#fff"></div><div class="a" style="left:818px;top:154px;width:1px;height:17px;background:#808080"></div><div class="t" style="left:730px;top:157px;transform:scaleX(0.9586);transform-origin:left 0">Room type</div><div class="a" style="left:819px;top:153px;width:1px;height:18px;background:#fff"></div><div class="a" style="left:853px;top:154px;width:1px;height:17px;background:#808080"></div><div class="t" style="left:820px;top:157px;transform:scaleX(0.9297);transform-origin:left 0">DOW</div><div class="a" style="left:854px;top:153px;width:1px;height:18px;background:#fff"></div><div class="a" style="left:921px;top:154px;width:1px;height:17px;background:#808080"></div><div class="t" style="left:855px;top:157px;transform:scaleX(0.9673);transform-origin:left 0">Check In</div><div class="a" style="left:922px;top:153px;width:1px;height:18px;background:#fff"></div><div class="a" style="left:956px;top:154px;width:1px;height:17px;background:#808080"></div><div class="t" style="left:923px;top:157px;transform:scaleX(0.9297);transform-origin:left 0">DOW</div><div class="a" style="left:957px;top:153px;width:1px;height:18px;background:#fff"></div><div class="a" style="left:1024px;top:154px;width:1px;height:17px;background:#808080"></div><div class="t" style="left:958px;top:157px;transform:scaleX(0.9621);transform-origin:left 0">Check Out</div><div class="a" style="left:1025px;top:153px;width:1px;height:18px;background:#fff"></div><div class="a" style="left:1086px;top:154px;width:1px;height:17px;background:#808080"></div><div class="t" style="left:1026px;top:157px;transform:scaleX(0.9415);transform-origin:left 0">Supplier</div><div class="a" style="left:1087px;top:153px;width:1px;height:18px;background:#fff"></div><div class="a" style="left:1111px;top:154px;width:1px;height:17px;background:#808080"></div><div class="t" style="left:1087px;width:25px;text-align:center;top:157px;transform:scaleX(0.9091);transform-origin:center 0">Er</div><div class="a" style="left:1112px;top:153px;width:1px;height:18px;background:#fff"></div><div class="a" style="left:1136px;top:154px;width:1px;height:17px;background:#808080"></div><div class="t" style="left:1112px;width:25px;text-align:center;top:157px;transform:scaleX(0.8810);transform-origin:center 0">NR</div><div class="a" style="left:1137px;top:153px;width:1px;height:18px;background:#fff"></div><div class="a" style="left:1161px;top:154px;width:1px;height:17px;background:#808080"></div><div class="t" style="left:1137px;width:25px;text-align:center;top:157px;transform:scaleX(0.8485);transform-origin:center 0">MS</div><div class="a" style="left:1162px;top:153px;width:1px;height:18px;background:#fff"></div><div class="a" style="left:1216px;top:154px;width:1px;height:17px;background:#808080"></div><div class="t" style="left:1161px;width:46px;text-align:right;top:157px;transform:scaleX(0.9177);transform-origin:right 0">Price</div><div class="a" style="left:1217px;top:153px;width:1px;height:18px;background:#fff"></div><div class="a" style="left:1271px;top:154px;width:1px;height:17px;background:#808080"></div><div class="t" style="left:1216px;width:53px;text-align:right;top:157px;transform:scaleX(0.8921);transform-origin:right 0">Incl.Fl.PP</div><div class="a" style="left:1272px;top:153px;width:1px;height:18px;background:#fff"></div><div class="a" style="left:1336px;top:154px;width:1px;height:17px;background:#808080"></div><div class="t" style="left:1271px;width:63px;text-align:right;top:157px;transform:scaleX(0.9512);transform-origin:right 0">Basket</div><div class="a" style="left:1337px;top:153px;width:1px;height:18px;background:#fff"></div><div class="a" style="left:1391px;top:154px;width:1px;height:17px;background:#808080"></div><div class="t" style="left:1336px;width:53px;text-align:right;top:157px;transform:scaleX(0.9580);transform-origin:right 0">Discount</div><div class="a" style="left:1392px;top:153px;width:1px;height:18px;background:#fff"></div><div class="a" style="left:1416px;top:154px;width:1px;height:17px;background:#808080"></div><div class="t" style="left:1392px;width:25px;text-align:center;top:157px;transform:scaleX(0.9462);transform-origin:center 0">Of</div><div class="a" style="left:1417px;top:153px;width:1px;height:18px;background:#fff"></div><div class="a" style="left:1476px;top:154px;width:1px;height:17px;background:#808080"></div><div class="t" style="left:1418px;top:157px;letter-spacing:0.053px">Contract</div><div class="a" style="left:1477px;top:153px;width:1px;height:18px;background:#fff"></div><div class="a" style="left:1551px;top:154px;width:1px;height:17px;background:#808080"></div><div class="t" style="left:1478px;top:157px;transform:scaleX(0.9459);transform-origin:left 0">Act. Supplier</div><div class="a" style="left:1552px;top:153px;width:1px;height:18px;background:#fff"></div><svg class="a" style="left:279px;top:157px" width="14" height="11" viewBox="0 0 14 11"><defs><linearGradient id="fn2" x1="0" x2="1"><stop offset="0" stop-color="#fff"/><stop offset="1" stop-color="#8098b8"/></linearGradient></defs><path d="M0.5 0.5 H13 L8 5.5 V10.5 H5.5 V5.5Z" fill="url(#fn2)" stroke="#203050" stroke-width="1"/></svg><svg class="a" style="left:1207px;top:160px" width="7" height="5" viewBox="0 0 7 5"><path d="M0 0.5h7L3.5 4.5z" fill="#a0a0a0"/></svg><div class="a" style="left:220px;top:172px;width:1353px;height:584px;background:#fff"></div><div class="a" style="left:220px;top:172px;width:1332px;height:584px;background:#bddffb"></div><div class="a" style="left:220px;top:201px;width:1353px;height:1px;background:#d6d3cc"></div><div class="a" style="left:220px;top:216px;width:1353px;height:1px;background:#d6d3cc"></div><div class="a" style="left:220px;top:231px;width:1353px;height:1px;background:#d6d3cc"></div><div class="a" style="left:220px;top:246px;width:1353px;height:1px;background:#d6d3cc"></div><div class="a" style="left:220px;top:261px;width:1353px;height:1px;background:#d6d3cc"></div><div class="a" style="left:220px;top:276px;width:1353px;height:1px;background:#d6d3cc"></div><div class="a" style="left:220px;top:291px;width:1353px;height:1px;background:#d6d3cc"></div><div class="a" style="left:220px;top:306px;width:1353px;height:1px;background:#d6d3cc"></div><div class="a" style="left:220px;top:321px;width:1353px;height:1px;background:#d6d3cc"></div><div class="a" style="left:220px;top:336px;width:1353px;height:1px;background:#d6d3cc"></div><div class="a" style="left:220px;top:351px;width:1353px;height:1px;background:#d6d3cc"></div><div class="a" style="left:220px;top:366px;width:1353px;height:1px;background:#d6d3cc"></div><div class="a" style="left:220px;top:381px;width:1353px;height:1px;background:#d6d3cc"></div><div class="a" style="left:220px;top:396px;width:1353px;height:1px;background:#d6d3cc"></div><div class="a" style="left:220px;top:411px;width:1353px;height:1px;background:#d6d3cc"></div><div class="a" style="left:220px;top:426px;width:1353px;height:1px;background:#d6d3cc"></div><div class="a" style="left:220px;top:441px;width:1353px;height:1px;background:#d6d3cc"></div><div class="a" style="left:220px;top:456px;width:1353px;height:1px;background:#d6d3cc"></div><div class="a" style="left:220px;top:471px;width:1353px;height:1px;background:#d6d3cc"></div><div class="a" style="left:220px;top:486px;width:1353px;height:1px;background:#d6d3cc"></div><div class="a" style="left:220px;top:501px;width:1353px;height:1px;background:#d6d3cc"></div><div class="a" style="left:220px;top:516px;width:1353px;height:1px;background:#d6d3cc"></div><div class="a" style="left:220px;top:531px;width:1353px;height:1px;background:#d6d3cc"></div><div class="a" style="left:220px;top:546px;width:1353px;height:1px;background:#d6d3cc"></div><div class="a" style="left:220px;top:561px;width:1353px;height:1px;background:#d6d3cc"></div><div class="a" style="left:220px;top:576px;width:1353px;height:1px;background:#d6d3cc"></div><div class="a" style="left:220px;top:591px;width:1353px;height:1px;background:#d6d3cc"></div><div class="a" style="left:220px;top:606px;width:1353px;height:1px;background:#d6d3cc"></div><div class="a" style="left:220px;top:621px;width:1353px;height:1px;background:#d6d3cc"></div><div class="a" style="left:220px;top:636px;width:1353px;height:1px;background:#d6d3cc"></div><div class="a" style="left:220px;top:651px;width:1353px;height:1px;background:#d6d3cc"></div><div class="a" style="left:220px;top:666px;width:1353px;height:1px;background:#d6d3cc"></div><div class="a" style="left:220px;top:681px;width:1353px;height:1px;background:#d6d3cc"></div><div class="a" style="left:220px;top:696px;width:1353px;height:1px;background:#d6d3cc"></div><div class="a" style="left:220px;top:711px;width:1353px;height:1px;background:#d6d3cc"></div><div class="a" style="left:220px;top:726px;width:1353px;height:1px;background:#d6d3cc"></div><div class="a" style="left:220px;top:741px;width:1353px;height:1px;background:#d6d3cc"></div><div class="a" style="left:220px;top:756px;width:1353px;height:1px;background:#d6d3cc"></div><div class="a" style="left:294px;top:172px;width:1px;height:584px;background:#d6d3cc"></div><div class="a" style="left:544px;top:172px;width:1px;height:584px;background:#d6d3cc"></div><div class="a" style="left:584px;top:172px;width:1px;height:584px;background:#d6d3cc"></div><div class="a" style="left:728px;top:172px;width:1px;height:584px;background:#d6d3cc"></div><div class="a" style="left:818px;top:172px;width:1px;height:584px;background:#d6d3cc"></div><div class="a" style="left:853px;top:172px;width:1px;height:584px;background:#d6d3cc"></div><div class="a" style="left:921px;top:172px;width:1px;height:584px;background:#d6d3cc"></div><div class="a" style="left:956px;top:172px;width:1px;height:584px;background:#d6d3cc"></div><div class="a" style="left:1024px;top:172px;width:1px;height:584px;background:#d6d3cc"></div><div class="a" style="left:1086px;top:172px;width:1px;height:584px;background:#d6d3cc"></div><div class="a" style="left:1111px;top:172px;width:1px;height:584px;background:#d6d3cc"></div><div class="a" style="left:1136px;top:172px;width:1px;height:584px;background:#d6d3cc"></div><div class="a" style="left:1161px;top:172px;width:1px;height:584px;background:#d6d3cc"></div><div class="a" style="left:1216px;top:172px;width:1px;height:584px;background:#d6d3cc"></div><div class="a" style="left:1271px;top:172px;width:1px;height:584px;background:#d6d3cc"></div><div class="a" style="left:1336px;top:172px;width:1px;height:584px;background:#d6d3cc"></div><div class="a" style="left:1391px;top:172px;width:1px;height:584px;background:#d6d3cc"></div><div class="a" style="left:1416px;top:172px;width:1px;height:584px;background:#d6d3cc"></div><div class="a" style="left:1476px;top:172px;width:1px;height:584px;background:#d6d3cc"></div><div class="a" style="left:1551px;top:172px;width:1px;height:584px;background:#d6d3cc"></div><div class="a" style="left:220px;top:172px;width:1353px;height:15px;background:#0a246a"></div><div class="t" style="left:221px;top:173px;color:#fff;letter-spacing:0.132px">Internation...</div><div class="t" style="left:296px;top:173px;color:#fff;transform:scaleX(0.9783);transform-origin:left 0">Comfort Inn &amp; Suites Convention Center</div><div class="t" style="left:546px;top:173px;color:#fff;transform:scaleX(0.9739);transform-origin:left 0">3 St...</div><div class="t" style="left:586px;top:173px;color:#fff;transform:scaleX(0.9481);transform-origin:left 0">American Breakfast</div><div class="t" style="left:730px;top:173px;color:#fff;transform:scaleX(0.9787);transform-origin:left 0">Twin Two Que...</div><div class="t" style="left:820px;top:173px;color:#fff;transform:scaleX(0.9688);transform-origin:left 0">Sat</div><div class="t" style="left:855px;top:173px;color:#fff;letter-spacing:0.094px">15/09/2018</div><div class="t" style="left:923px;top:173px;color:#fff;transform:scaleX(0.9688);transform-origin:left 0">Sat</div><div class="t" style="left:958px;top:173px;color:#fff;letter-spacing:0.094px">29/09/2018</div><div class="t" style="left:1026px;top:173px;color:#fff;transform:scaleX(0.9688);transform-origin:left 0">Hotelbeds</div><div class="t" style="left:1418px;top:173px;color:#fff;transform:scaleX(0.8398);transform-origin:left 0">XML</div><div class="t" style="right:372px;top:173px;text-align:right;color:#fff">601.62</div><div class="t" style="right:317px;top:173px;text-align:right;color:#fff">601.62</div><div class="t" style="right:252px;top:173px;text-align:right;color:#fff">601.62</div><div class="t" style="right:197px;top:173px;text-align:right;color:#fff">0.00</div><div class="t" style="left:221px;top:188px;color:#000;letter-spacing:0.132px">Internation...</div><div class="t" style="left:296px;top:188px;color:#000;transform:scaleX(0.9783);transform-origin:left 0">Comfort Inn &amp; Suites Convention Center</div><div class="t" style="left:546px;top:188px;color:#000;transform:scaleX(0.9739);transform-origin:left 0">3 St...</div><div class="t" style="left:586px;top:188px;color:#000;transform:scaleX(0.9481);transform-origin:left 0">American Breakfast</div><div class="t" style="left:730px;top:188px;color:#000;transform:scaleX(0.9660);transform-origin:left 0">Double Two Q...</div><div class="t" style="left:820px;top:188px;color:#000;transform:scaleX(0.9688);transform-origin:left 0">Sat</div><div class="t" style="left:855px;top:188px;color:#000;letter-spacing:0.094px">15/09/2018</div><div class="t" style="left:923px;top:188px;color:#000;transform:scaleX(0.9688);transform-origin:left 0">Sat</div><div class="t" style="left:958px;top:188px;color:#000;letter-spacing:0.094px">29/09/2018</div><div class="t" style="left:1026px;top:188px;color:#000;transform:scaleX(0.9688);transform-origin:left 0">Hotelbeds</div><div class="t" style="left:1418px;top:188px;color:#000;transform:scaleX(0.8398);transform-origin:left 0">XML</div><div class="t" style="right:372px;top:188px;text-align:right;color:#000">601.62</div><div class="t" style="right:317px;top:188px;text-align:right;color:#000">601.62</div><div class="t" style="right:252px;top:188px;text-align:right;color:#000">601.62</div><div class="t" style="right:197px;top:188px;text-align:right;color:#000">0.00</div><div class="t" style="left:221px;top:203px;color:#000;letter-spacing:0.132px">Internation...</div><div class="t" style="left:296px;top:203px;color:#000;transform:scaleX(0.9653);transform-origin:left 0">Country Inn &amp; Suites By Carlson Orlando</div><div class="t" style="left:546px;top:203px;color:#000;transform:scaleX(0.9753);transform-origin:left 0">3 Stars</div><div class="t" style="left:586px;top:203px;color:#000;transform:scaleX(0.9734);transform-origin:left 0">Buffet Breakfast</div><div class="t" style="left:730px;top:203px;color:#000;transform:scaleX(0.9660);transform-origin:left 0">Double Two Q...</div><div class="t" style="left:820px;top:203px;color:#000;transform:scaleX(0.9688);transform-origin:left 0">Sat</div><div class="t" style="left:855px;top:203px;color:#000;letter-spacing:0.094px">15/09/2018</div><div class="t" style="left:923px;top:203px;color:#000;transform:scaleX(0.9688);transform-origin:left 0">Sat</div><div class="t" style="left:958px;top:203px;color:#000;letter-spacing:0.094px">29/09/2018</div><div class="t" style="left:1026px;top:203px;color:#000;transform:scaleX(0.9688);transform-origin:left 0">Hotelbeds</div><div class="t" style="left:1418px;top:203px;color:#000;transform:scaleX(0.8398);transform-origin:left 0">XML</div><div class="t" style="right:372px;top:203px;text-align:right;color:#000">627.40</div><div class="t" style="right:317px;top:203px;text-align:right;color:#000">627.40</div><div class="t" style="right:252px;top:203px;text-align:right;color:#000">627.40</div><div class="t" style="right:197px;top:203px;text-align:right;color:#000">0.00</div><div class="t" style="left:221px;top:218px;color:#000;letter-spacing:0.029px">Orlando Int...</div><div class="t" style="left:296px;top:218px;color:#000;transform:scaleX(0.9674);transform-origin:left 0">Ramada Plaza Resort &amp; Suites International Drive</div><div class="t" style="left:546px;top:218px;color:#000;transform:scaleX(0.9806);transform-origin:left 0">2.0</div><div class="t" style="left:586px;top:218px;color:#000;transform:scaleX(0.9793);transform-origin:left 0">Continental Breakfast</div><div class="t" style="left:730px;top:218px;color:#000;transform:scaleX(0.9605);transform-origin:left 0">Standard Room</div><div class="t" style="left:820px;top:218px;color:#000;transform:scaleX(0.9688);transform-origin:left 0">Sat</div><div class="t" style="left:855px;top:218px;color:#000;letter-spacing:0.094px">15/09/2018</div><div class="t" style="left:923px;top:218px;color:#000;transform:scaleX(0.9688);transform-origin:left 0">Sat</div><div class="t" style="left:958px;top:218px;color:#000;letter-spacing:0.094px">29/09/2018</div><div class="t" style="left:1026px;top:218px;color:#000;transform:scaleX(0.9486);transform-origin:left 0">Get A Bed</div><div class="t" style="left:1418px;top:218px;color:#000;transform:scaleX(0.8398);transform-origin:left 0">XML</div><div class="t" style="right:372px;top:218px;text-align:right;color:#000">647.74</div><div class="t" style="right:317px;top:218px;text-align:right;color:#000">647.74</div><div class="t" style="right:252px;top:218px;text-align:right;color:#000">647.74</div><div class="t" style="right:197px;top:218px;text-align:right;color:#000">0.00</div><div class="t" style="left:221px;top:233px;color:#000;letter-spacing:0.132px">Internation...</div><div class="t" style="left:296px;top:233px;color:#000;transform:scaleX(0.9764);transform-origin:left 0">Rosen Inn At Pointe Orlando&nbsp; 2018</div><div class="t" style="left:546px;top:233px;color:#000;transform:scaleX(0.9806);transform-origin:left 0">3.0</div><div class="t" style="left:586px;top:233px;color:#000;transform:scaleX(0.9267);transform-origin:left 0">Room Only</div><div class="t" style="left:730px;top:233px;color:#000;transform:scaleX(0.9605);transform-origin:left 0">Standard Room</div><div class="t" style="left:820px;top:233px;color:#000;transform:scaleX(0.9688);transform-origin:left 0">Sat</div><div class="t" style="left:855px;top:233px;color:#000;letter-spacing:0.094px">15/09/2018</div><div class="t" style="left:923px;top:233px;color:#000;transform:scaleX(0.9688);transform-origin:left 0">Sat</div><div class="t" style="left:958px;top:233px;color:#000;letter-spacing:0.094px">29/09/2018</div><div class="t" style="left:1026px;top:233px;color:#000;transform:scaleX(0.9426);transform-origin:left 0">Ocean B...</div><div class="t" style="left:1418px;top:233px;color:#000;transform:scaleX(0.8398);transform-origin:left 0">XML</div><div class="t" style="right:372px;top:233px;text-align:right;color:#000">650.66</div><div class="t" style="right:317px;top:233px;text-align:right;color:#000">650.66</div><div class="t" style="right:252px;top:233px;text-align:right;color:#000">650.66</div><div class="t" style="right:197px;top:233px;text-align:right;color:#000">0.00</div><div class="t" style="left:221px;top:248px;color:#000;letter-spacing:0.132px">Internation...</div><div class="t" style="left:296px;top:248px;color:#000;transform:scaleX(0.9689);transform-origin:left 0">Rosen Inn Closest to Universal 2018</div><div class="t" style="left:546px;top:248px;color:#000;transform:scaleX(0.9806);transform-origin:left 0">3.5</div><div class="t" style="left:586px;top:248px;color:#000;transform:scaleX(0.9267);transform-origin:left 0">Room Only</div><div class="t" style="left:730px;top:248px;color:#000;transform:scaleX(0.9605);transform-origin:left 0">Standard Room</div><div class="t" style="left:820px;top:248px;color:#000;transform:scaleX(0.9688);transform-origin:left 0">Sat</div><div class="t" style="left:855px;top:248px;color:#000;letter-spacing:0.094px">15/09/2018</div><div class="t" style="left:923px;top:248px;color:#000;transform:scaleX(0.9688);transform-origin:left 0">Sat</div><div class="t" style="left:958px;top:248px;color:#000;letter-spacing:0.094px">29/09/2018</div><div class="t" style="left:1026px;top:248px;color:#000;transform:scaleX(0.9426);transform-origin:left 0">Ocean B...</div><div class="t" style="left:1418px;top:248px;color:#000;transform:scaleX(0.8398);transform-origin:left 0">XML</div><div class="t" style="right:372px;top:248px;text-align:right;color:#000">650.66</div><div class="t" style="right:317px;top:248px;text-align:right;color:#000">650.66</div><div class="t" style="right:252px;top:248px;text-align:right;color:#000">650.66</div><div class="t" style="right:197px;top:248px;text-align:right;color:#000">0.00</div><div class="t" style="left:221px;top:263px;color:#000;letter-spacing:0.132px">Internation...</div><div class="t" style="left:296px;top:263px;color:#000;transform:scaleX(0.9977);transform-origin:left 0">Rosen Inn International&nbsp; 2018</div><div class="t" style="left:546px;top:263px;color:#000;transform:scaleX(0.9806);transform-origin:left 0">3.0</div><div class="t" style="left:586px;top:263px;color:#000;transform:scaleX(0.9267);transform-origin:left 0">Room Only</div><div class="t" style="left:730px;top:263px;color:#000;transform:scaleX(0.9605);transform-origin:left 0">Standard Room</div><div class="t" style="left:820px;top:263px;color:#000;transform:scaleX(0.9688);transform-origin:left 0">Sat</div><div class="t" style="left:855px;top:263px;color:#000;letter-spacing:0.094px">15/09/2018</div><div class="t" style="left:923px;top:263px;color:#000;transform:scaleX(0.9688);transform-origin:left 0">Sat</div><div class="t" style="left:958px;top:263px;color:#000;letter-spacing:0.094px">29/09/2018</div><div class="t" style="left:1026px;top:263px;color:#000;transform:scaleX(0.9426);transform-origin:left 0">Ocean B...</div><div class="t" style="left:1418px;top:263px;color:#000;transform:scaleX(0.8398);transform-origin:left 0">XML</div><div class="t" style="right:372px;top:263px;text-align:right;color:#000">650.66</div><div class="t" style="right:317px;top:263px;text-align:right;color:#000">650.66</div><div class="t" style="right:252px;top:263px;text-align:right;color:#000">650.66</div><div class="t" style="right:197px;top:263px;text-align:right;color:#000">0.00</div><div class="t" style="left:221px;top:278px;color:#000;letter-spacing:0.029px">Orlando Int...</div><div class="t" style="left:296px;top:278px;color:#000;transform:scaleX(0.9674);transform-origin:left 0">Ramada Plaza Resort &amp; Suites International Drive</div><div class="t" style="left:546px;top:278px;color:#000;transform:scaleX(0.9806);transform-origin:left 0">2.0</div><div class="t" style="left:586px;top:278px;color:#000;transform:scaleX(0.9793);transform-origin:left 0">Continental Breakfast</div><div class="t" style="left:730px;top:278px;color:#000;transform:scaleX(0.9261);transform-origin:left 0">High Floor Room</div><div class="t" style="left:820px;top:278px;color:#000;transform:scaleX(0.9688);transform-origin:left 0">Sat</div><div class="t" style="left:855px;top:278px;color:#000;letter-spacing:0.094px">15/09/2018</div><div class="t" style="left:923px;top:278px;color:#000;transform:scaleX(0.9688);transform-origin:left 0">Sat</div><div class="t" style="left:958px;top:278px;color:#000;letter-spacing:0.094px">29/09/2018</div><div class="t" style="left:1026px;top:278px;color:#000;transform:scaleX(0.9486);transform-origin:left 0">Get A Bed</div><div class="t" style="left:1418px;top:278px;color:#000;transform:scaleX(0.8398);transform-origin:left 0">XML</div><div class="t" style="right:372px;top:278px;text-align:right;color:#000">679.80</div><div class="t" style="right:317px;top:278px;text-align:right;color:#000">679.80</div><div class="t" style="right:252px;top:278px;text-align:right;color:#000">679.80</div><div class="t" style="right:197px;top:278px;text-align:right;color:#000">0.00</div><div class="t" style="left:221px;top:293px;color:#000;letter-spacing:0.029px">Orlando Int...</div><div class="t" style="left:296px;top:293px;color:#000;letter-spacing:0.011px">Rosen Inn International</div><div class="t" style="left:546px;top:293px;color:#000;transform:scaleX(0.9806);transform-origin:left 0">2.0</div><div class="t" style="left:586px;top:293px;color:#000;transform:scaleX(0.9267);transform-origin:left 0">Room Only</div><div class="t" style="left:730px;top:293px;color:#000;transform:scaleX(0.9605);transform-origin:left 0">Standard Room</div><div class="t" style="left:820px;top:293px;color:#000;transform:scaleX(0.9688);transform-origin:left 0">Sat</div><div class="t" style="left:855px;top:293px;color:#000;letter-spacing:0.094px">15/09/2018</div><div class="t" style="left:923px;top:293px;color:#000;transform:scaleX(0.9688);transform-origin:left 0">Sat</div><div class="t" style="left:958px;top:293px;color:#000;letter-spacing:0.094px">29/09/2018</div><div class="t" style="left:1026px;top:293px;color:#000;transform:scaleX(0.9486);transform-origin:left 0">Get A Bed</div><div class="t" style="left:1418px;top:293px;color:#000;transform:scaleX(0.8398);transform-origin:left 0">XML</div><svg class="a" style="left:1096px;top:294px" width="5" height="5" viewBox="0 0 5 5"><path d="M2 0h1v5H2zM0 1h1v1H0zM4 1h1v1H4zM0 3h1v1H0zM4 3h1v1H4zM1 2h3v1H1z" fill="#000" shape-rendering="crispEdges"/></svg><div class="t" style="right:372px;top:293px;text-align:right;color:#000">699.04</div><div class="t" style="right:317px;top:293px;text-align:right;color:#000">699.04</div><div class="t" style="right:252px;top:293px;text-align:right;color:#000">699.04</div><div class="t" style="right:197px;top:293px;text-align:right;color:#000">0.00</div><div class="t" style="left:221px;top:308px;color:#000;letter-spacing:0.029px">Orlando Int...</div><div class="t" style="left:296px;top:308px;color:#000;transform:scaleX(0.9797);transform-origin:left 0">Rosen Inn at Pointe Orlando</div><div class="t" style="left:546px;top:308px;color:#000;transform:scaleX(0.9806);transform-origin:left 0">3.0</div><div class="t" style="left:586px;top:308px;color:#000;transform:scaleX(0.9267);transform-origin:left 0">Room Only</div><div class="t" style="left:730px;top:308px;color:#000;transform:scaleX(0.9605);transform-origin:left 0">Standard Room</div><div class="t" style="left:820px;top:308px;color:#000;transform:scaleX(0.9688);transform-origin:left 0">Sat</div><div class="t" style="left:855px;top:308px;color:#000;letter-spacing:0.094px">15/09/2018</div><div class="t" style="left:923px;top:308px;color:#000;transform:scaleX(0.9688);transform-origin:left 0">Sat</div><div class="t" style="left:958px;top:308px;color:#000;letter-spacing:0.094px">29/09/2018</div><div class="t" style="left:1026px;top:308px;color:#000;transform:scaleX(0.9486);transform-origin:left 0">Get A Bed</div><div class="t" style="left:1418px;top:308px;color:#000;transform:scaleX(0.8398);transform-origin:left 0">XML</div><svg class="a" style="left:1096px;top:309px" width="5" height="5" viewBox="0 0 5 5"><path d="M2 0h1v5H2zM0 1h1v1H0zM4 1h1v1H4zM0 3h1v1H0zM4 3h1v1H4zM1 2h3v1H1z" fill="#000" shape-rendering="crispEdges"/></svg><div class="t" style="right:372px;top:308px;text-align:right;color:#000">750.35</div><div class="t" style="right:317px;top:308px;text-align:right;color:#000">750.35</div><div class="t" style="right:252px;top:308px;text-align:right;color:#000">750.35</div><div class="t" style="right:197px;top:308px;text-align:right;color:#000">0.00</div><div class="t" style="left:221px;top:323px;color:#000;letter-spacing:0.029px">Orlando Int...</div><div class="t" style="left:296px;top:323px;color:#000;transform:scaleX(0.9692);transform-origin:left 0">Rosen Inn closest to Universal</div><div class="t" style="left:546px;top:323px;color:#000;transform:scaleX(0.9806);transform-origin:left 0">2.0</div><div class="t" style="left:586px;top:323px;color:#000;transform:scaleX(0.9267);transform-origin:left 0">Room Only</div><div class="t" style="left:730px;top:323px;color:#000;transform:scaleX(0.9519);transform-origin:left 0">Run Of House ...</div><div class="t" style="left:820px;top:323px;color:#000;transform:scaleX(0.9688);transform-origin:left 0">Sat</div><div class="t" style="left:855px;top:323px;color:#000;letter-spacing:0.094px">15/09/2018</div><div class="t" style="left:923px;top:323px;color:#000;transform:scaleX(0.9688);transform-origin:left 0">Sat</div><div class="t" style="left:958px;top:323px;color:#000;letter-spacing:0.094px">29/09/2018</div><div class="t" style="left:1026px;top:323px;color:#000;transform:scaleX(0.9486);transform-origin:left 0">Get A Bed</div><div class="t" style="left:1418px;top:323px;color:#000;transform:scaleX(0.8398);transform-origin:left 0">XML</div><div class="t" style="right:372px;top:323px;text-align:right;color:#000">750.35</div><div class="t" style="right:317px;top:323px;text-align:right;color:#000">750.35</div><div class="t" style="right:252px;top:323px;text-align:right;color:#000">750.35</div><div class="t" style="right:197px;top:323px;text-align:right;color:#000">0.00</div><div class="t" style="left:221px;top:338px;color:#000;letter-spacing:0.132px">Internation...</div><div class="t" style="left:296px;top:338px;color:#000;transform:scaleX(0.9813);transform-origin:left 0">Doubletree by Hilton at the Entrance to Universal</div><div class="t" style="left:546px;top:338px;color:#000;transform:scaleX(0.9806);transform-origin:left 0">3.5</div><div class="t" style="left:586px;top:338px;color:#000;transform:scaleX(0.9267);transform-origin:left 0">Room Only</div><div class="t" style="left:730px;top:338px;color:#000;transform:scaleX(0.9519);transform-origin:left 0">Run Of House ...</div><div class="t" style="left:820px;top:338px;color:#000;transform:scaleX(0.9688);transform-origin:left 0">Sat</div><div class="t" style="left:855px;top:338px;color:#000;letter-spacing:0.094px">15/09/2018</div><div class="t" style="left:923px;top:338px;color:#000;transform:scaleX(0.9688);transform-origin:left 0">Sat</div><div class="t" style="left:958px;top:338px;color:#000;letter-spacing:0.094px">29/09/2018</div><div class="t" style="left:1026px;top:338px;color:#000;transform:scaleX(0.9426);transform-origin:left 0">Ocean B...</div><div class="t" style="left:1418px;top:338px;color:#000;transform:scaleX(0.8398);transform-origin:left 0">XML</div><div class="t" style="right:372px;top:338px;text-align:right;color:#000">768.59</div><div class="t" style="right:317px;top:338px;text-align:right;color:#000">768.59</div><div class="t" style="right:252px;top:338px;text-align:right;color:#000">768.59</div><div class="t" style="right:197px;top:338px;text-align:right;color:#000">0.00</div><div class="t" style="left:221px;top:353px;color:#000;letter-spacing:0.132px">Internation...</div><div class="t" style="left:296px;top:353px;color:#000;transform:scaleX(0.9813);transform-origin:left 0">Doubletree by Hilton at the Entrance to Universal</div><div class="t" style="left:546px;top:353px;color:#000;transform:scaleX(0.9753);transform-origin:left 0">4 Stars</div><div class="t" style="left:586px;top:353px;color:#000;transform:scaleX(0.9267);transform-origin:left 0">Room Only</div><div class="t" style="left:730px;top:353px;color:#000;transform:scaleX(0.9560);transform-origin:left 0">Double Guest ...</div><div class="t" style="left:820px;top:353px;color:#000;transform:scaleX(0.9688);transform-origin:left 0">Sat</div><div class="t" style="left:855px;top:353px;color:#000;letter-spacing:0.094px">15/09/2018</div><div class="t" style="left:923px;top:353px;color:#000;transform:scaleX(0.9688);transform-origin:left 0">Sat</div><div class="t" style="left:958px;top:353px;color:#000;letter-spacing:0.094px">29/09/2018</div><div class="t" style="left:1026px;top:353px;color:#000;transform:scaleX(0.9688);transform-origin:left 0">Hotelbeds</div><div class="t" style="left:1418px;top:353px;color:#000;transform:scaleX(0.8398);transform-origin:left 0">XML</div><div class="t" style="right:372px;top:353px;text-align:right;color:#000">833.08</div><div class="t" style="right:317px;top:353px;text-align:right;color:#000">833.08</div><div class="t" style="right:252px;top:353px;text-align:right;color:#000">833.08</div><div class="t" style="right:197px;top:353px;text-align:right;color:#000">0.00</div><div class="t" style="left:221px;top:368px;color:#000;letter-spacing:0.029px">Orlando Int...</div><div class="t" style="left:296px;top:368px;color:#000;transform:scaleX(0.9744);transform-origin:left 0">The Avanti Resort</div><div class="t" style="left:546px;top:368px;color:#000;transform:scaleX(0.9806);transform-origin:left 0">3.0</div><div class="t" style="left:586px;top:368px;color:#000;transform:scaleX(0.9267);transform-origin:left 0">Room Only</div><div class="t" style="left:730px;top:368px;color:#000;transform:scaleX(0.9540);transform-origin:left 0">Standard Room C</div><div class="t" style="left:820px;top:368px;color:#000;transform:scaleX(0.9688);transform-origin:left 0">Sat</div><div class="t" style="left:855px;top:368px;color:#000;letter-spacing:0.094px">15/09/2018</div><div class="t" style="left:923px;top:368px;color:#000;transform:scaleX(0.9688);transform-origin:left 0">Sat</div><div class="t" style="left:958px;top:368px;color:#000;letter-spacing:0.094px">29/09/2018</div><div class="t" style="left:1026px;top:368px;color:#000;transform:scaleX(0.9486);transform-origin:left 0">Get A Bed</div><div class="t" style="left:1418px;top:368px;color:#000;transform:scaleX(0.8398);transform-origin:left 0">XML</div><svg class="a" style="left:1096px;top:369px" width="5" height="5" viewBox="0 0 5 5"><path d="M2 0h1v5H2zM0 1h1v1H0zM4 1h1v1H4zM0 3h1v1H0zM4 3h1v1H4zM1 2h3v1H1z" fill="#000" shape-rendering="crispEdges"/></svg><div class="t" style="right:372px;top:368px;text-align:right;color:#000">839.37</div><div class="t" style="right:317px;top:368px;text-align:right;color:#000">839.37</div><div class="t" style="right:252px;top:368px;text-align:right;color:#000">839.37</div><div class="t" style="right:197px;top:368px;text-align:right;color:#000">0.00</div><div class="t" style="left:221px;top:383px;color:#000;letter-spacing:0.132px">Internation...</div><div class="t" style="left:296px;top:383px;color:#000;transform:scaleX(0.9746);transform-origin:left 0">Doubletree by Hilton Orlando at Sea World</div><div class="t" style="left:546px;top:383px;color:#000;transform:scaleX(0.9806);transform-origin:left 0">4.0</div><div class="t" style="left:586px;top:383px;color:#000;transform:scaleX(0.9267);transform-origin:left 0">Room Only</div><div class="t" style="left:730px;top:383px;color:#000;transform:scaleX(0.9605);transform-origin:left 0">Standard Room</div><div class="t" style="left:820px;top:383px;color:#000;transform:scaleX(0.9688);transform-origin:left 0">Sat</div><div class="t" style="left:855px;top:383px;color:#000;letter-spacing:0.094px">15/09/2018</div><div class="t" style="left:923px;top:383px;color:#000;transform:scaleX(0.9688);transform-origin:left 0">Sat</div><div class="t" style="left:958px;top:383px;color:#000;letter-spacing:0.094px">29/09/2018</div><div class="t" style="left:1026px;top:383px;color:#000;transform:scaleX(0.9426);transform-origin:left 0">Ocean B...</div><div class="t" style="left:1418px;top:383px;color:#000;transform:scaleX(0.8398);transform-origin:left 0">XML</div><svg class="a" style="left:1096px;top:384px" width="5" height="5" viewBox="0 0 5 5"><path d="M2 0h1v5H2zM0 1h1v1H0zM4 1h1v1H4zM0 3h1v1H0zM4 3h1v1H4zM1 2h3v1H1z" fill="#000" shape-rendering="crispEdges"/></svg><div class="t" style="right:372px;top:383px;text-align:right;color:#000">840.10</div><div class="t" style="right:317px;top:383px;text-align:right;color:#000">840.10</div><div class="t" style="right:252px;top:383px;text-align:right;color:#000">840.10</div><div class="t" style="right:197px;top:383px;text-align:right;color:#000">0.00</div><div class="t" style="left:221px;top:398px;color:#000;letter-spacing:0.029px">Orlando Int...</div><div class="t" style="left:296px;top:398px;color:#000;transform:scaleX(0.9832);transform-origin:left 0">Red Roof Inn Orlando International Drive</div><div class="t" style="left:546px;top:398px;color:#000;transform:scaleX(0.9806);transform-origin:left 0">3.0</div><div class="t" style="left:586px;top:398px;color:#000;transform:scaleX(0.9267);transform-origin:left 0">Room Only</div><div class="t" style="left:730px;top:398px;color:#000;transform:scaleX(0.9739);transform-origin:left 0">Standard Doub...</div><div class="t" style="left:820px;top:398px;color:#000;transform:scaleX(0.9688);transform-origin:left 0">Sat</div><div class="t" style="left:855px;top:398px;color:#000;letter-spacing:0.094px">15/09/2018</div><div class="t" style="left:923px;top:398px;color:#000;transform:scaleX(0.9688);transform-origin:left 0">Sat</div><div class="t" style="left:958px;top:398px;color:#000;letter-spacing:0.094px">29/09/2018</div><div class="t" style="left:1026px;top:398px;color:#000;transform:scaleX(0.9486);transform-origin:left 0">Get A Bed</div><div class="t" style="left:1418px;top:398px;color:#000;transform:scaleX(0.8398);transform-origin:left 0">XML</div><div class="t" style="right:372px;top:398px;text-align:right;color:#000">844.71</div><div class="t" style="right:317px;top:398px;text-align:right;color:#000">844.71</div><div class="t" style="right:252px;top:398px;text-align:right;color:#000">844.71</div><div class="t" style="right:197px;top:398px;text-align:right;color:#000">0.00</div><div class="t" style="left:221px;top:413px;color:#000;letter-spacing:0.029px">Orlando Int...</div><div class="t" style="left:296px;top:413px;color:#000;transform:scaleX(0.9832);transform-origin:left 0">Red Roof Inn Orlando International Drive</div><div class="t" style="left:546px;top:413px;color:#000;transform:scaleX(0.9806);transform-origin:left 0">3.0</div><div class="t" style="left:586px;top:413px;color:#000;transform:scaleX(0.9267);transform-origin:left 0">Room Only</div><div class="t" style="left:730px;top:413px;color:#000;transform:scaleX(0.9539);transform-origin:left 0">Standard King Ma</div><div class="t" style="left:820px;top:413px;color:#000;transform:scaleX(0.9688);transform-origin:left 0">Sat</div><div class="t" style="left:855px;top:413px;color:#000;letter-spacing:0.094px">15/09/2018</div><div class="t" style="left:923px;top:413px;color:#000;transform:scaleX(0.9688);transform-origin:left 0">Sat</div><div class="t" style="left:958px;top:413px;color:#000;letter-spacing:0.094px">29/09/2018</div><div class="t" style="left:1026px;top:413px;color:#000;transform:scaleX(0.9486);transform-origin:left 0">Get A Bed</div><div class="t" style="left:1418px;top:413px;color:#000;transform:scaleX(0.8398);transform-origin:left 0">XML</div><div class="t" style="right:372px;top:413px;text-align:right;color:#000">844.71</div><div class="t" style="right:317px;top:413px;text-align:right;color:#000">844.71</div><div class="t" style="right:252px;top:413px;text-align:right;color:#000">844.71</div><div class="t" style="right:197px;top:413px;text-align:right;color:#000">0.00</div><div class="t" style="left:221px;top:428px;color:#000;letter-spacing:0.029px">Orlando Int...</div><div class="t" style="left:296px;top:428px;color:#000;transform:scaleX(0.9674);transform-origin:left 0">Ramada Plaza Resort &amp; Suites International Drive</div><div class="t" style="left:546px;top:428px;color:#000;transform:scaleX(0.9806);transform-origin:left 0">2.0</div><div class="t" style="left:586px;top:428px;color:#000;transform:scaleX(0.9793);transform-origin:left 0">Continental Breakfast</div><div class="t" style="left:730px;top:428px;color:#000;transform:scaleX(0.9569);transform-origin:left 0">Superior 1 Bed...</div><div class="t" style="left:820px;top:428px;color:#000;transform:scaleX(0.9688);transform-origin:left 0">Sat</div><div class="t" style="left:855px;top:428px;color:#000;letter-spacing:0.094px">15/09/2018</div><div class="t" style="left:923px;top:428px;color:#000;transform:scaleX(0.9688);transform-origin:left 0">Sat</div><div class="t" style="left:958px;top:428px;color:#000;letter-spacing:0.094px">29/09/2018</div><div class="t" style="left:1026px;top:428px;color:#000;transform:scaleX(0.9486);transform-origin:left 0">Get A Bed</div><div class="t" style="left:1418px;top:428px;color:#000;transform:scaleX(0.8398);transform-origin:left 0">XML</div><div class="t" style="right:372px;top:428px;text-align:right;color:#000">846.55</div><div class="t" style="right:317px;top:428px;text-align:right;color:#000">846.55</div><div class="t" style="right:252px;top:428px;text-align:right;color:#000">846.55</div><div class="t" style="right:197px;top:428px;text-align:right;color:#000">0.00</div><div class="t" style="left:221px;top:443px;color:#000;letter-spacing:0.029px">Orlando Int...</div><div class="t" style="left:296px;top:443px;color:#000;transform:scaleX(0.9484);transform-origin:left 0">The Enclave Hotel &amp; Suites</div><div class="t" style="left:546px;top:443px;color:#000;transform:scaleX(0.9806);transform-origin:left 0">3.0</div><div class="t" style="left:586px;top:443px;color:#000;transform:scaleX(0.9793);transform-origin:left 0">Continental Breakfast</div><div class="t" style="left:730px;top:443px;color:#000;transform:scaleX(0.9489);transform-origin:left 0">Deluxe Studio</div><div class="t" style="left:820px;top:443px;color:#000;transform:scaleX(0.9688);transform-origin:left 0">Sat</div><div class="t" style="left:855px;top:443px;color:#000;letter-spacing:0.094px">15/09/2018</div><div class="t" style="left:923px;top:443px;color:#000;transform:scaleX(0.9688);transform-origin:left 0">Sat</div><div class="t" style="left:958px;top:443px;color:#000;letter-spacing:0.094px">29/09/2018</div><div class="t" style="left:1026px;top:443px;color:#000;transform:scaleX(0.9486);transform-origin:left 0">Get A Bed</div><div class="t" style="left:1418px;top:443px;color:#000;transform:scaleX(0.8398);transform-origin:left 0">XML</div><svg class="a" style="left:1096px;top:444px" width="5" height="5" viewBox="0 0 5 5"><path d="M2 0h1v5H2zM0 1h1v1H0zM4 1h1v1H4zM0 3h1v1H0zM4 3h1v1H4zM1 2h3v1H1z" fill="#000" shape-rendering="crispEdges"/></svg><div class="t" style="right:372px;top:443px;text-align:right;color:#000">872.20</div><div class="t" style="right:317px;top:443px;text-align:right;color:#000">872.20</div><div class="t" style="right:252px;top:443px;text-align:right;color:#000">872.20</div><div class="t" style="right:197px;top:443px;text-align:right;color:#000">0.00</div><div class="t" style="left:221px;top:458px;color:#000;letter-spacing:0.132px">Internation...</div><div class="t" style="left:296px;top:458px;color:#000;transform:scaleX(0.9653);transform-origin:left 0">Country Inn &amp; Suites By Carlson Orlando</div><div class="t" style="left:546px;top:458px;color:#000;transform:scaleX(0.9753);transform-origin:left 0">3 Stars</div><div class="t" style="left:586px;top:458px;color:#000;transform:scaleX(0.9734);transform-origin:left 0">Buffet Breakfast</div><div class="t" style="left:730px;top:458px;color:#000;transform:scaleX(0.9668);transform-origin:left 0">Suite One Bedr...</div><div class="t" style="left:820px;top:458px;color:#000;transform:scaleX(0.9688);transform-origin:left 0">Sat</div><div class="t" style="left:855px;top:458px;color:#000;letter-spacing:0.094px">15/09/2018</div><div class="t" style="left:923px;top:458px;color:#000;transform:scaleX(0.9688);transform-origin:left 0">Sat</div><div class="t" style="left:958px;top:458px;color:#000;letter-spacing:0.094px">29/09/2018</div><div class="t" style="left:1026px;top:458px;color:#000;transform:scaleX(0.9688);transform-origin:left 0">Hotelbeds</div><div class="t" style="left:1418px;top:458px;color:#000;transform:scaleX(0.8398);transform-origin:left 0">XML</div><div class="t" style="right:372px;top:458px;text-align:right;color:#000">883.56</div><div class="t" style="right:317px;top:458px;text-align:right;color:#000">883.56</div><div class="t" style="right:252px;top:458px;text-align:right;color:#000">883.56</div><div class="t" style="right:197px;top:458px;text-align:right;color:#000">0.00</div><div class="t" style="left:221px;top:473px;color:#000;letter-spacing:0.029px">Orlando Int...</div><div class="t" style="left:296px;top:473px;color:#000;letter-spacing:0.011px">Rosen Inn International</div><div class="t" style="left:546px;top:473px;color:#000;transform:scaleX(0.9806);transform-origin:left 0">2.0</div><div class="t" style="left:586px;top:473px;color:#000;transform:scaleX(0.9734);transform-origin:left 0">Buffet Breakfast</div><div class="t" style="left:730px;top:473px;color:#000;transform:scaleX(0.9605);transform-origin:left 0">Standard Room</div><div class="t" style="left:820px;top:473px;color:#000;transform:scaleX(0.9688);transform-origin:left 0">Sat</div><div class="t" style="left:855px;top:473px;color:#000;letter-spacing:0.094px">15/09/2018</div><div class="t" style="left:923px;top:473px;color:#000;transform:scaleX(0.9688);transform-origin:left 0">Sat</div><div class="t" style="left:958px;top:473px;color:#000;letter-spacing:0.094px">29/09/2018</div><div class="t" style="left:1026px;top:473px;color:#000;transform:scaleX(0.9486);transform-origin:left 0">Get A Bed</div><div class="t" style="left:1418px;top:473px;color:#000;transform:scaleX(0.8398);transform-origin:left 0">XML</div><svg class="a" style="left:1096px;top:474px" width="5" height="5" viewBox="0 0 5 5"><path d="M2 0h1v5H2zM0 1h1v1H0zM4 1h1v1H4zM0 3h1v1H0zM4 3h1v1H4zM1 2h3v1H1z" fill="#000" shape-rendering="crispEdges"/></svg><div class="t" style="right:372px;top:473px;text-align:right;color:#000">943.20</div><div class="t" style="right:317px;top:473px;text-align:right;color:#000">943.20</div><div class="t" style="right:252px;top:473px;text-align:right;color:#000">943.20</div><div class="t" style="right:197px;top:473px;text-align:right;color:#000">0.00</div><div class="t" style="left:221px;top:488px;color:#000;letter-spacing:0.029px">Orlando Int...</div><div class="t" style="left:296px;top:488px;color:#000;transform:scaleX(0.9744);transform-origin:left 0">Doubletree by Hilton Orlando at SeaWorld</div><div class="t" style="left:546px;top:488px;color:#000;transform:scaleX(0.9806);transform-origin:left 0">3.0</div><div class="t" style="left:586px;top:488px;color:#000;transform:scaleX(0.9267);transform-origin:left 0">Room Only</div><div class="t" style="left:730px;top:488px;color:#000;transform:scaleX(0.9568);transform-origin:left 0">Resort Room</div><div class="t" style="left:820px;top:488px;color:#000;transform:scaleX(0.9688);transform-origin:left 0">Sat</div><div class="t" style="left:855px;top:488px;color:#000;letter-spacing:0.094px">15/09/2018</div><div class="t" style="left:923px;top:488px;color:#000;transform:scaleX(0.9688);transform-origin:left 0">Sat</div><div class="t" style="left:958px;top:488px;color:#000;letter-spacing:0.094px">29/09/2018</div><div class="t" style="left:1026px;top:488px;color:#000;transform:scaleX(0.9486);transform-origin:left 0">Get A Bed</div><div class="t" style="left:1418px;top:488px;color:#000;transform:scaleX(0.8398);transform-origin:left 0">XML</div><div class="t" style="right:372px;top:488px;text-align:right;color:#000">978.48</div><div class="t" style="right:317px;top:488px;text-align:right;color:#000">978.48</div><div class="t" style="right:252px;top:488px;text-align:right;color:#000">978.48</div><div class="t" style="right:197px;top:488px;text-align:right;color:#000">0.00</div><div class="t" style="left:221px;top:503px;color:#000;letter-spacing:0.029px">Orlando Int...</div><div class="t" style="left:296px;top:503px;color:#000;transform:scaleX(0.9797);transform-origin:left 0">Rosen Inn at Pointe Orlando</div><div class="t" style="left:546px;top:503px;color:#000;transform:scaleX(0.9806);transform-origin:left 0">3.0</div><div class="t" style="left:586px;top:503px;color:#000;transform:scaleX(0.9734);transform-origin:left 0">Buffet Breakfast</div><div class="t" style="left:730px;top:503px;color:#000;transform:scaleX(0.9605);transform-origin:left 0">Standard Room</div><div class="t" style="left:820px;top:503px;color:#000;transform:scaleX(0.9688);transform-origin:left 0">Sat</div><div class="t" style="left:855px;top:503px;color:#000;letter-spacing:0.094px">15/09/2018</div><div class="t" style="left:923px;top:503px;color:#000;transform:scaleX(0.9688);transform-origin:left 0">Sat</div><div class="t" style="left:958px;top:503px;color:#000;letter-spacing:0.094px">29/09/2018</div><div class="t" style="left:1026px;top:503px;color:#000;transform:scaleX(0.9486);transform-origin:left 0">Get A Bed</div><div class="t" style="left:1418px;top:503px;color:#000;transform:scaleX(0.8398);transform-origin:left 0">XML</div><svg class="a" style="left:1096px;top:504px" width="5" height="5" viewBox="0 0 5 5"><path d="M2 0h1v5H2zM0 1h1v1H0zM4 1h1v1H4zM0 3h1v1H0zM4 3h1v1H4zM1 2h3v1H1z" fill="#000" shape-rendering="crispEdges"/></svg><div class="t" style="right:372px;top:503px;text-align:right;color:#000">994.05</div><div class="t" style="right:317px;top:503px;text-align:right;color:#000">994.05</div><div class="t" style="right:252px;top:503px;text-align:right;color:#000">994.05</div><div class="t" style="right:197px;top:503px;text-align:right;color:#000">0.00</div><div class="t" style="left:221px;top:518px;color:#000;letter-spacing:0.029px">Orlando Int...</div><div class="t" style="left:296px;top:518px;color:#000;transform:scaleX(0.9674);transform-origin:left 0">Ramada Plaza Resort &amp; Suites International Drive</div><div class="t" style="left:546px;top:518px;color:#000;transform:scaleX(0.9806);transform-origin:left 0">2.0</div><div class="t" style="left:586px;top:518px;color:#000;transform:scaleX(0.9793);transform-origin:left 0">Continental Breakfast</div><div class="t" style="left:730px;top:518px;color:#000;transform:scaleX(0.9605);transform-origin:left 0">Luxury 1 Bedr...</div><div class="t" style="left:820px;top:518px;color:#000;transform:scaleX(0.9688);transform-origin:left 0">Sat</div><div class="t" style="left:855px;top:518px;color:#000;letter-spacing:0.094px">15/09/2018</div><div class="t" style="left:923px;top:518px;color:#000;transform:scaleX(0.9688);transform-origin:left 0">Sat</div><div class="t" style="left:958px;top:518px;color:#000;letter-spacing:0.094px">29/09/2018</div><div class="t" style="left:1026px;top:518px;color:#000;transform:scaleX(0.9486);transform-origin:left 0">Get A Bed</div><div class="t" style="left:1418px;top:518px;color:#000;transform:scaleX(0.8398);transform-origin:left 0">XML</div><div class="t" style="right:372px;top:518px;text-align:right;color:#000">1,000.46</div><div class="t" style="right:317px;top:518px;text-align:right;color:#000">1,000.46</div><div class="t" style="right:252px;top:518px;text-align:right;color:#000">1,000.46</div><div class="t" style="right:197px;top:518px;text-align:right;color:#000">0.00</div><div class="t" style="left:221px;top:533px;color:#000;letter-spacing:0.029px">Orlando Int...</div><div class="t" style="left:296px;top:533px;color:#000;transform:scaleX(0.9832);transform-origin:left 0">Red Roof Inn Orlando International Drive</div><div class="t" style="left:546px;top:533px;color:#000;transform:scaleX(0.9806);transform-origin:left 0">3.0</div><div class="t" style="left:586px;top:533px;color:#000;transform:scaleX(0.9267);transform-origin:left 0">Room Only</div><div class="t" style="left:730px;top:533px;color:#000;transform:scaleX(0.9468);transform-origin:left 0">Deluxe Double...</div><div class="t" style="left:820px;top:533px;color:#000;transform:scaleX(0.9688);transform-origin:left 0">Sat</div><div class="t" style="left:855px;top:533px;color:#000;letter-spacing:0.094px">15/09/2018</div><div class="t" style="left:923px;top:533px;color:#000;transform:scaleX(0.9688);transform-origin:left 0">Sat</div><div class="t" style="left:958px;top:533px;color:#000;letter-spacing:0.094px">29/09/2018</div><div class="t" style="left:1026px;top:533px;color:#000;transform:scaleX(0.9486);transform-origin:left 0">Get A Bed</div><div class="t" style="left:1418px;top:533px;color:#000;transform:scaleX(0.8398);transform-origin:left 0">XML</div><div class="t" style="right:372px;top:533px;text-align:right;color:#000">1,017.87</div><div class="t" style="right:317px;top:533px;text-align:right;color:#000">1,017.87</div><div class="t" style="right:252px;top:533px;text-align:right;color:#000">1,017.87</div><div class="t" style="right:197px;top:533px;text-align:right;color:#000">0.00</div><div class="t" style="left:221px;top:548px;color:#000;letter-spacing:0.029px">Orlando Int...</div><div class="t" style="left:296px;top:548px;color:#000;transform:scaleX(0.9832);transform-origin:left 0">Red Roof Inn Orlando International Drive</div><div class="t" style="left:546px;top:548px;color:#000;transform:scaleX(0.9806);transform-origin:left 0">3.0</div><div class="t" style="left:586px;top:548px;color:#000;transform:scaleX(0.9267);transform-origin:left 0">Room Only</div><div class="t" style="left:730px;top:548px;color:#000;transform:scaleX(0.9412);transform-origin:left 0">Superior King Ma</div><div class="t" style="left:820px;top:548px;color:#000;transform:scaleX(0.9688);transform-origin:left 0">Sat</div><div class="t" style="left:855px;top:548px;color:#000;letter-spacing:0.094px">15/09/2018</div><div class="t" style="left:923px;top:548px;color:#000;transform:scaleX(0.9688);transform-origin:left 0">Sat</div><div class="t" style="left:958px;top:548px;color:#000;letter-spacing:0.094px">29/09/2018</div><div class="t" style="left:1026px;top:548px;color:#000;transform:scaleX(0.9486);transform-origin:left 0">Get A Bed</div><div class="t" style="left:1418px;top:548px;color:#000;transform:scaleX(0.8398);transform-origin:left 0">XML</div><div class="t" style="right:372px;top:548px;text-align:right;color:#000">1,017.87</div><div class="t" style="right:317px;top:548px;text-align:right;color:#000">1,017.87</div><div class="t" style="right:252px;top:548px;text-align:right;color:#000">1,017.87</div><div class="t" style="right:197px;top:548px;text-align:right;color:#000">0.00</div><div class="t" style="left:221px;top:563px;color:#000;letter-spacing:0.029px">Orlando Int...</div><div class="t" style="left:296px;top:563px;color:#000;transform:scaleX(0.9674);transform-origin:left 0">Ramada Plaza Resort &amp; Suites International Drive</div><div class="t" style="left:546px;top:563px;color:#000;transform:scaleX(0.9806);transform-origin:left 0">2.0</div><div class="t" style="left:586px;top:563px;color:#000;transform:scaleX(0.9793);transform-origin:left 0">Continental Breakfast</div><div class="t" style="left:730px;top:563px;color:#000;transform:scaleX(0.9560);transform-origin:left 0">Club 1 Bedroo...</div><div class="t" style="left:820px;top:563px;color:#000;transform:scaleX(0.9688);transform-origin:left 0">Sat</div><div class="t" style="left:855px;top:563px;color:#000;letter-spacing:0.094px">15/09/2018</div><div class="t" style="left:923px;top:563px;color:#000;transform:scaleX(0.9688);transform-origin:left 0">Sat</div><div class="t" style="left:958px;top:563px;color:#000;letter-spacing:0.094px">29/09/2018</div><div class="t" style="left:1026px;top:563px;color:#000;transform:scaleX(0.9486);transform-origin:left 0">Get A Bed</div><div class="t" style="left:1418px;top:563px;color:#000;transform:scaleX(0.8398);transform-origin:left 0">XML</div><div class="t" style="right:372px;top:563px;text-align:right;color:#000">1,034.82</div><div class="t" style="right:317px;top:563px;text-align:right;color:#000">1,034.82</div><div class="t" style="right:252px;top:563px;text-align:right;color:#000">1,034.82</div><div class="t" style="right:197px;top:563px;text-align:right;color:#000">0.00</div><div class="t" style="left:221px;top:578px;color:#000;letter-spacing:0.132px">Internation...</div><div class="t" style="left:296px;top:578px;color:#000;transform:scaleX(0.9746);transform-origin:left 0">Doubletree by Hilton Orlando at Sea World</div><div class="t" style="left:546px;top:578px;color:#000;transform:scaleX(0.9806);transform-origin:left 0">4.0</div><div class="t" style="left:586px;top:578px;color:#000;transform:scaleX(0.9267);transform-origin:left 0">Room Only</div><div class="t" style="left:730px;top:578px;color:#000;transform:scaleX(0.9088);transform-origin:left 0">Premium</div><div class="t" style="left:820px;top:578px;color:#000;transform:scaleX(0.9688);transform-origin:left 0">Sat</div><div class="t" style="left:855px;top:578px;color:#000;letter-spacing:0.094px">15/09/2018</div><div class="t" style="left:923px;top:578px;color:#000;transform:scaleX(0.9688);transform-origin:left 0">Sat</div><div class="t" style="left:958px;top:578px;color:#000;letter-spacing:0.094px">29/09/2018</div><div class="t" style="left:1026px;top:578px;color:#000;transform:scaleX(0.9426);transform-origin:left 0">Ocean B...</div><div class="t" style="left:1418px;top:578px;color:#000;transform:scaleX(0.8398);transform-origin:left 0">XML</div><svg class="a" style="left:1096px;top:579px" width="5" height="5" viewBox="0 0 5 5"><path d="M2 0h1v5H2zM0 1h1v1H0zM4 1h1v1H4zM0 3h1v1H0zM4 3h1v1H4zM1 2h3v1H1z" fill="#000" shape-rendering="crispEdges"/></svg><div class="t" style="right:372px;top:578px;text-align:right;color:#000">1,070.26</div><div class="t" style="right:317px;top:578px;text-align:right;color:#000">1,070.26</div><div class="t" style="right:252px;top:578px;text-align:right;color:#000">1,070.26</div><div class="t" style="right:197px;top:578px;text-align:right;color:#000">0.00</div><div class="t" style="left:221px;top:593px;color:#000;letter-spacing:0.029px">Orlando Int...</div><div class="t" style="left:296px;top:593px;color:#000;transform:scaleX(0.9744);transform-origin:left 0">Doubletree by Hilton Orlando at SeaWorld</div><div class="t" style="left:546px;top:593px;color:#000;transform:scaleX(0.9806);transform-origin:left 0">3.0</div><div class="t" style="left:586px;top:593px;color:#000;transform:scaleX(0.9267);transform-origin:left 0">Room Only</div><div class="t" style="left:730px;top:593px;color:#000;transform:scaleX(0.9162);transform-origin:left 0">Premium Room</div><div class="t" style="left:820px;top:593px;color:#000;transform:scaleX(0.9688);transform-origin:left 0">Sat</div><div class="t" style="left:855px;top:593px;color:#000;letter-spacing:0.094px">15/09/2018</div><div class="t" style="left:923px;top:593px;color:#000;transform:scaleX(0.9688);transform-origin:left 0">Sat</div><div class="t" style="left:958px;top:593px;color:#000;letter-spacing:0.094px">29/09/2018</div><div class="t" style="left:1026px;top:593px;color:#000;transform:scaleX(0.9486);transform-origin:left 0">Get A Bed</div><div class="t" style="left:1418px;top:593px;color:#000;transform:scaleX(0.8398);transform-origin:left 0">XML</div><div class="t" style="right:372px;top:593px;text-align:right;color:#000">1,242.33</div><div class="t" style="right:317px;top:593px;text-align:right;color:#000">1,242.33</div><div class="t" style="right:252px;top:593px;text-align:right;color:#000">1,242.33</div><div class="t" style="right:197px;top:593px;text-align:right;color:#000">0.00</div><div class="t" style="left:221px;top:608px;color:#000;letter-spacing:0.132px">Internation...</div><div class="t" style="left:296px;top:608px;color:#000;transform:scaleX(0.9746);transform-origin:left 0">Doubletree by Hilton Orlando at Sea World</div><div class="t" style="left:546px;top:608px;color:#000;transform:scaleX(0.9806);transform-origin:left 0">4.0</div><div class="t" style="left:586px;top:608px;color:#000;transform:scaleX(0.9267);transform-origin:left 0">Room Only</div><div class="t" style="left:730px;top:608px;color:#000;transform:scaleX(0.9717);transform-origin:left 0">Tower Room</div><div class="t" style="left:820px;top:608px;color:#000;transform:scaleX(0.9688);transform-origin:left 0">Sat</div><div class="t" style="left:855px;top:608px;color:#000;letter-spacing:0.094px">15/09/2018</div><div class="t" style="left:923px;top:608px;color:#000;transform:scaleX(0.9688);transform-origin:left 0">Sat</div><div class="t" style="left:958px;top:608px;color:#000;letter-spacing:0.094px">29/09/2018</div><div class="t" style="left:1026px;top:608px;color:#000;transform:scaleX(0.9426);transform-origin:left 0">Ocean B...</div><div class="t" style="left:1418px;top:608px;color:#000;transform:scaleX(0.8398);transform-origin:left 0">XML</div><svg class="a" style="left:1096px;top:609px" width="5" height="5" viewBox="0 0 5 5"><path d="M2 0h1v5H2zM0 1h1v1H0zM4 1h1v1H4zM0 3h1v1H0zM4 3h1v1H4zM1 2h3v1H1z" fill="#000" shape-rendering="crispEdges"/></svg><div class="t" style="right:372px;top:608px;text-align:right;color:#000">1,300.43</div><div class="t" style="right:317px;top:608px;text-align:right;color:#000">1,300.43</div><div class="t" style="right:252px;top:608px;text-align:right;color:#000">1,300.43</div><div class="t" style="right:197px;top:608px;text-align:right;color:#000">0.00</div><div class="t" style="left:221px;top:623px;color:#000;letter-spacing:0.029px">Orlando Int...</div><div class="t" style="left:296px;top:623px;color:#000;transform:scaleX(0.9484);transform-origin:left 0">The Enclave Hotel &amp; Suites</div><div class="t" style="left:546px;top:623px;color:#000;transform:scaleX(0.9806);transform-origin:left 0">3.0</div><div class="t" style="left:586px;top:623px;color:#000;transform:scaleX(0.9793);transform-origin:left 0">Continental Breakfast</div><div class="t" style="left:730px;top:623px;color:#000;transform:scaleX(0.9581);transform-origin:left 0">Deluxe 2 Bedr...</div><div class="t" style="left:820px;top:623px;color:#000;transform:scaleX(0.9688);transform-origin:left 0">Sat</div><div class="t" style="left:855px;top:623px;color:#000;letter-spacing:0.094px">15/09/2018</div><div class="t" style="left:923px;top:623px;color:#000;transform:scaleX(0.9688);transform-origin:left 0">Sat</div><div class="t" style="left:958px;top:623px;color:#000;letter-spacing:0.094px">29/09/2018</div><div class="t" style="left:1026px;top:623px;color:#000;transform:scaleX(0.9486);transform-origin:left 0">Get A Bed</div><div class="t" style="left:1418px;top:623px;color:#000;transform:scaleX(0.8398);transform-origin:left 0">XML</div><svg class="a" style="left:1096px;top:624px" width="5" height="5" viewBox="0 0 5 5"><path d="M2 0h1v5H2zM0 1h1v1H0zM4 1h1v1H4zM0 3h1v1H0zM4 3h1v1H4zM1 2h3v1H1z" fill="#000" shape-rendering="crispEdges"/></svg><div class="t" style="right:372px;top:623px;text-align:right;color:#000">1,314.71</div><div class="t" style="right:317px;top:623px;text-align:right;color:#000">1,314.71</div><div class="t" style="right:252px;top:623px;text-align:right;color:#000">1,314.71</div><div class="t" style="right:197px;top:623px;text-align:right;color:#000">0.00</div><div class="t" style="left:221px;top:638px;color:#000;letter-spacing:0.132px">Internation...</div><div class="t" style="left:296px;top:638px;color:#000;transform:scaleX(0.9556);transform-origin:left 0">Sheraton Vistana Villages</div><div class="t" style="left:546px;top:638px;color:#000;transform:scaleX(0.9753);transform-origin:left 0">4 Stars</div><div class="t" style="left:586px;top:638px;color:#000;transform:scaleX(0.9267);transform-origin:left 0">Room Only</div><div class="t" style="left:730px;top:638px;color:#000;transform:scaleX(0.9417);transform-origin:left 0">Villa One Bedro...</div><div class="t" style="left:820px;top:638px;color:#000;transform:scaleX(0.9688);transform-origin:left 0">Sat</div><div class="t" style="left:855px;top:638px;color:#000;letter-spacing:0.094px">15/09/2018</div><div class="t" style="left:923px;top:638px;color:#000;transform:scaleX(0.9688);transform-origin:left 0">Sat</div><div class="t" style="left:958px;top:638px;color:#000;letter-spacing:0.094px">29/09/2018</div><div class="t" style="left:1026px;top:638px;color:#000;transform:scaleX(0.9688);transform-origin:left 0">Hotelbeds</div><div class="t" style="left:1418px;top:638px;color:#000;transform:scaleX(0.8398);transform-origin:left 0">XML</div><div class="t" style="right:372px;top:638px;text-align:right;color:#000">1,316.13</div><div class="t" style="right:317px;top:638px;text-align:right;color:#000">1,316.13</div><div class="t" style="right:252px;top:638px;text-align:right;color:#000">1,316.13</div><div class="t" style="right:197px;top:638px;text-align:right;color:#000">0.00</div><div class="t" style="left:221px;top:653px;color:#000;letter-spacing:0.132px">Internation...</div><div class="t" style="left:296px;top:653px;color:#000;transform:scaleX(0.9476);transform-origin:left 0">Sonesta ES Suites 2018</div><div class="t" style="left:546px;top:653px;color:#000;transform:scaleX(0.9806);transform-origin:left 0">3.5</div><div class="t" style="left:586px;top:653px;color:#000;transform:scaleX(0.9547);transform-origin:left 0">Bed And Breakfast</div><div class="t" style="left:730px;top:653px;color:#000;transform:scaleX(0.9539);transform-origin:left 0">One Bedroom ...</div><div class="t" style="left:820px;top:653px;color:#000;transform:scaleX(0.9688);transform-origin:left 0">Sat</div><div class="t" style="left:855px;top:653px;color:#000;letter-spacing:0.094px">15/09/2018</div><div class="t" style="left:923px;top:653px;color:#000;transform:scaleX(0.9688);transform-origin:left 0">Sat</div><div class="t" style="left:958px;top:653px;color:#000;letter-spacing:0.094px">29/09/2018</div><div class="t" style="left:1026px;top:653px;color:#000;transform:scaleX(0.9426);transform-origin:left 0">Ocean B...</div><div class="t" style="left:1418px;top:653px;color:#000;transform:scaleX(0.8398);transform-origin:left 0">XML</div><div class="t" style="right:372px;top:653px;text-align:right;color:#000">1,324.55</div><div class="t" style="right:317px;top:653px;text-align:right;color:#000">1,324.55</div><div class="t" style="right:252px;top:653px;text-align:right;color:#000">1,324.55</div><div class="t" style="right:197px;top:653px;text-align:right;color:#000">0.00</div><div class="t" style="left:221px;top:668px;color:#000;letter-spacing:0.132px">Internation...</div><div class="t" style="left:296px;top:668px;color:#000;transform:scaleX(0.9775);transform-origin:left 0">Westgate Palace 2018</div><div class="t" style="left:546px;top:668px;color:#000;transform:scaleX(0.9806);transform-origin:left 0">3.0</div><div class="t" style="left:586px;top:668px;color:#000;transform:scaleX(0.9267);transform-origin:left 0">Room Only</div><div class="t" style="left:730px;top:668px;color:#000;transform:scaleX(0.9449);transform-origin:left 0">2 Bedroom Del...</div><div class="t" style="left:820px;top:668px;color:#000;transform:scaleX(0.9688);transform-origin:left 0">Sat</div><div class="t" style="left:855px;top:668px;color:#000;letter-spacing:0.094px">15/09/2018</div><div class="t" style="left:923px;top:668px;color:#000;transform:scaleX(0.9688);transform-origin:left 0">Sat</div><div class="t" style="left:958px;top:668px;color:#000;letter-spacing:0.094px">29/09/2018</div><div class="t" style="left:1026px;top:668px;color:#000;transform:scaleX(0.9426);transform-origin:left 0">Ocean B...</div><div class="t" style="left:1418px;top:668px;color:#000;transform:scaleX(0.8398);transform-origin:left 0">XML</div><div class="t" style="right:372px;top:668px;text-align:right;color:#000">1,341.98</div><div class="t" style="right:317px;top:668px;text-align:right;color:#000">1,341.98</div><div class="t" style="right:252px;top:668px;text-align:right;color:#000">1,341.98</div><div class="t" style="right:197px;top:668px;text-align:right;color:#000">0.00</div><div class="t" style="left:221px;top:683px;color:#000;letter-spacing:0.029px">Orlando Int...</div><div class="t" style="left:296px;top:683px;color:#000;transform:scaleX(0.9556);transform-origin:left 0">Sheraton Vistana Villages</div><div class="t" style="left:546px;top:683px;color:#000;transform:scaleX(0.9806);transform-origin:left 0">4.0</div><div class="t" style="left:586px;top:683px;color:#000;transform:scaleX(0.9267);transform-origin:left 0">Room Only</div><div class="t" style="left:730px;top:683px;color:#000;transform:scaleX(0.9351);transform-origin:left 0">1 Bedroom Villa...</div><div class="t" style="left:820px;top:683px;color:#000;transform:scaleX(0.9688);transform-origin:left 0">Sat</div><div class="t" style="left:855px;top:683px;color:#000;letter-spacing:0.094px">15/09/2018</div><div class="t" style="left:923px;top:683px;color:#000;transform:scaleX(0.9688);transform-origin:left 0">Sat</div><div class="t" style="left:958px;top:683px;color:#000;letter-spacing:0.094px">29/09/2018</div><div class="t" style="left:1026px;top:683px;color:#000;transform:scaleX(0.9486);transform-origin:left 0">Get A Bed</div><div class="t" style="left:1418px;top:683px;color:#000;transform:scaleX(0.8398);transform-origin:left 0">XML</div><div class="t" style="right:372px;top:683px;text-align:right;color:#000">1,385.21</div><div class="t" style="right:317px;top:683px;text-align:right;color:#000">1,385.21</div><div class="t" style="right:252px;top:683px;text-align:right;color:#000">1,385.21</div><div class="t" style="right:197px;top:683px;text-align:right;color:#000">0.00</div><div class="t" style="left:221px;top:698px;color:#000;letter-spacing:0.029px">Orlando Int...</div><div class="t" style="left:296px;top:698px;color:#000;transform:scaleX(0.9556);transform-origin:left 0">Sheraton Vistana Villages</div><div class="t" style="left:546px;top:698px;color:#000;transform:scaleX(0.9806);transform-origin:left 0">4.0</div><div class="t" style="left:586px;top:698px;color:#000;transform:scaleX(0.9267);transform-origin:left 0">Room Only</div><div class="t" style="left:730px;top:698px;color:#000;transform:scaleX(0.9351);transform-origin:left 0">1 Bedroom Villa...</div><div class="t" style="left:820px;top:698px;color:#000;transform:scaleX(0.9688);transform-origin:left 0">Sat</div><div class="t" style="left:855px;top:698px;color:#000;letter-spacing:0.094px">15/09/2018</div><div class="t" style="left:923px;top:698px;color:#000;transform:scaleX(0.9688);transform-origin:left 0">Sat</div><div class="t" style="left:958px;top:698px;color:#000;letter-spacing:0.094px">29/09/2018</div><div class="t" style="left:1026px;top:698px;color:#000;transform:scaleX(0.9486);transform-origin:left 0">Get A Bed</div><div class="t" style="left:1418px;top:698px;color:#000;transform:scaleX(0.8398);transform-origin:left 0">XML</div><div class="t" style="right:372px;top:698px;text-align:right;color:#000">1,385.21</div><div class="t" style="right:317px;top:698px;text-align:right;color:#000">1,385.21</div><div class="t" style="right:252px;top:698px;text-align:right;color:#000">1,385.21</div><div class="t" style="right:197px;top:698px;text-align:right;color:#000">0.00</div><div class="t" style="left:221px;top:713px;color:#000;letter-spacing:0.029px">Orlando Int...</div><div class="t" style="left:296px;top:713px;color:#000;transform:scaleX(0.9439);transform-origin:left 0">Rosen Plaza Hotel</div><div class="t" style="left:546px;top:713px;color:#000;transform:scaleX(0.9806);transform-origin:left 0">3.0</div><div class="t" style="left:586px;top:713px;color:#000;transform:scaleX(0.9267);transform-origin:left 0">Room Only</div><div class="t" style="left:730px;top:713px;color:#000;transform:scaleX(0.9468);transform-origin:left 0">Deluxe Run Of...</div><div class="t" style="left:820px;top:713px;color:#000;transform:scaleX(0.9688);transform-origin:left 0">Sat</div><div class="t" style="left:855px;top:713px;color:#000;letter-spacing:0.094px">15/09/2018</div><div class="t" style="left:923px;top:713px;color:#000;transform:scaleX(0.9688);transform-origin:left 0">Sat</div><div class="t" style="left:958px;top:713px;color:#000;letter-spacing:0.094px">29/09/2018</div><div class="t" style="left:1026px;top:713px;color:#000;transform:scaleX(0.9486);transform-origin:left 0">Get A Bed</div><div class="t" style="left:1418px;top:713px;color:#000;transform:scaleX(0.8398);transform-origin:left 0">XML</div><div class="t" style="right:372px;top:713px;text-align:right;color:#000">1,476.88</div><div class="t" style="right:317px;top:713px;text-align:right;color:#000">1,476.88</div><div class="t" style="right:252px;top:713px;text-align:right;color:#000">1,476.88</div><div class="t" style="right:197px;top:713px;text-align:right;color:#000">0.00</div><div class="t" style="left:221px;top:728px;color:#000;letter-spacing:0.029px">Orlando Int...</div><div class="t" style="left:296px;top:728px;color:#000;transform:scaleX(0.9439);transform-origin:left 0">Rosen Plaza Hotel</div><div class="t" style="left:546px;top:728px;color:#000;transform:scaleX(0.9806);transform-origin:left 0">3.0</div><div class="t" style="left:586px;top:728px;color:#000;transform:scaleX(0.9267);transform-origin:left 0">Room Only</div><div class="t" style="left:730px;top:728px;color:#000;transform:scaleX(0.9468);transform-origin:left 0">Deluxe Run Of...</div><div class="t" style="left:820px;top:728px;color:#000;transform:scaleX(0.9688);transform-origin:left 0">Sat</div><div class="t" style="left:855px;top:728px;color:#000;letter-spacing:0.094px">15/09/2018</div><div class="t" style="left:923px;top:728px;color:#000;transform:scaleX(0.9688);transform-origin:left 0">Sat</div><div class="t" style="left:958px;top:728px;color:#000;letter-spacing:0.094px">29/09/2018</div><div class="t" style="left:1026px;top:728px;color:#000;transform:scaleX(0.9486);transform-origin:left 0">Get A Bed</div><div class="t" style="left:1418px;top:728px;color:#000;transform:scaleX(0.8398);transform-origin:left 0">XML</div><div class="t" style="right:372px;top:728px;text-align:right;color:#000">1,476.88</div><div class="t" style="right:317px;top:728px;text-align:right;color:#000">1,476.88</div><div class="t" style="right:252px;top:728px;text-align:right;color:#000">1,476.88</div><div class="t" style="right:197px;top:728px;text-align:right;color:#000">0.00</div><div class="t" style="left:221px;top:743px;color:#000;letter-spacing:0.029px">Orlando Int...</div><div class="t" style="left:296px;top:743px;color:#000;transform:scaleX(0.9744);transform-origin:left 0">Doubletree by Hilton Orlando at SeaWorld</div><div class="t" style="left:546px;top:743px;color:#000;transform:scaleX(0.9806);transform-origin:left 0">3.0</div><div class="t" style="left:586px;top:743px;color:#000;transform:scaleX(0.9267);transform-origin:left 0">Room Only</div><div class="t" style="left:730px;top:743px;color:#000;transform:scaleX(0.9789);transform-origin:left 0">Tower Room Tr1</div><div class="t" style="left:820px;top:743px;color:#000;transform:scaleX(0.9688);transform-origin:left 0">Sat</div><div class="t" style="left:855px;top:743px;color:#000;letter-spacing:0.094px">15/09/2018</div><div class="t" style="left:923px;top:743px;color:#000;transform:scaleX(0.9688);transform-origin:left 0">Sat</div><div class="t" style="left:958px;top:743px;color:#000;letter-spacing:0.094px">29/09/2018</div><div class="t" style="left:1026px;top:743px;color:#000;transform:scaleX(0.9486);transform-origin:left 0">Get A Bed</div><div class="t" style="left:1418px;top:743px;color:#000;transform:scaleX(0.8398);transform-origin:left 0">XML</div><div class="t" style="right:372px;top:743px;text-align:right;color:#000">1,511.69</div><div class="t" style="right:317px;top:743px;text-align:right;color:#000">1,511.69</div><div class="t" style="right:252px;top:743px;text-align:right;color:#000">1,511.69</div><div class="t" style="right:197px;top:743px;text-align:right;color:#000">0.00</div><div class="a" style="left:1572px;top:153px;width:15px;height:603px;background:#fff"></div><div class="a" style="left:1573px;top:169px;width:14px;height:571px;background:repeating-conic-gradient(#d4d0c8 0 25%,#fff 0 50%) 0 0/2px 2px"></div><div class="a" style="left:1573px;top:153px;width:14px;height:16px;background:#d4d0c8;border-top:1px solid #d4d0c8;border-left:1px solid #d4d0c8;border-bottom:1px solid #404040;box-shadow:inset 1px 1px #fff,inset 0 -1px #808080"></div><div class="a" style="left:1573px;top:740px;width:14px;height:16px;background:#d4d0c8;border-top:1px solid #d4d0c8;border-left:1px solid #d4d0c8;border-bottom:1px solid #404040;box-shadow:inset 1px 1px #fff,inset 0 -1px #808080"></div><svg class="a" style="left:1577px;top:159px" width="8" height="5" viewBox="0 0 8 5"><path d="M0 4h7L3.5 0.5z" fill="#000"/></svg><svg class="a" style="left:1577px;top:746px" width="8" height="5" viewBox="0 0 8 5"><path d="M0 0h7L3.5 4z" fill="#000"/></svg><div class="a" style="left:1573px;top:169px;width:14px;height:297px;background:#d4d0c8;border-top:1px solid #d4d0c8;border-left:1px solid #d4d0c8;border-bottom:1px solid #404040;box-shadow:inset 1px 1px #fff,inset 0 -1px #808080"></div><div class="t " style="left:222px;top:783px;;letter-spacing:0.036px;">First portion: 7.3 sec, total search time: 25.7 sec</div><div class="a" style="left:1560px;top:778px;width:23px;height:22px;background:#d4d0c8;border-top:1px solid #fff;border-left:1px solid #fff;border-right:1px solid #404040;border-bottom:1px solid #404040;box-shadow:inset -1px -1px #808080"></div><svg class="a" style="left:1568px;top:782px" width="6" height="13" viewBox="0 0 6 13"><rect x="2" y="0.5" width="2.2" height="2" fill="#0a50a8"/><path d="M0.5 4h3.7v7h1.5v1.5H0.3V11h1.5V5.3H0.5z" fill="#0a50a8"/></svg><div class="a" style="left:215px;top:805px;width:1372px;height:1px;background:#808080"></div><div class="a" style="left:215px;top:806px;width:52px;height:17px;background:#d4d0c8"></div><div class="a" style="left:267px;top:806px;width:1px;height:17px;background:#8c8c8c"></div><div class="t" style="left:215px;width:52px;text-align:center;top:808px;color:#000;transform:scaleX(0.9137);transform-origin:center 0">Summary</div><div class="a" style="left:268px;top:806px;width:39px;height:17px;background:#d4d0c8"></div><div class="a" style="left:307px;top:806px;width:1px;height:17px;background:#8c8c8c"></div><div class="t" style="left:268px;width:39px;text-align:center;top:808px;color:#000;transform:scaleX(0.9467);transform-origin:center 0">Search</div><div class="a" style="left:308px;top:806px;width:66px;height:17px;background:#ccffcc"></div><div class="a" style="left:374px;top:806px;width:1px;height:17px;background:#8c8c8c"></div><div class="t" style="left:308px;width:66px;text-align:center;top:808px;color:#000;transform:scaleX(0.9052);transform-origin:center 0">Acc 2A MCO</div><div class="a" style="left:375px;top:806px;width:113px;height:17px;background:#ccffcc"></div><div class="a" style="left:488px;top:806px;width:1px;height:17px;background:#8c8c8c"></div><div class="t" style="left:375px;width:113px;text-align:center;top:808px;color:#000;transform:scaleX(0.9849);transform-origin:center 0">Car MCO; 08/04/2018</div><div class="a" style="left:489px;top:806px;width:107px;height:17px;background:#c4c4ff"></div><div class="a" style="left:596px;top:806px;width:1px;height:17px;background:#8c8c8c"></div><div class="t" style="left:489px;width:107px;text-align:center;top:808px;color:#000;transform:scaleX(0.9057);transform-origin:center 0">Flt 1A LON MCO LON</div><div class="a" style="left:597px;top:806px;width:66px;height:17px;background:#0a246a"></div><div class="a" style="left:663px;top:806px;width:1px;height:17px;background:#8c8c8c"></div><div class="t" style="left:597px;width:66px;text-align:center;top:808px;color:#fff;transform:scaleX(0.9052);transform-origin:center 0">Acc 1A MCO</div><div class="a" style="left:664px;top:806px;width:113px;height:17px;background:#c4c4ff"></div><div class="a" style="left:777px;top:806px;width:1px;height:17px;background:#8c8c8c"></div><div class="t" style="left:664px;width:113px;text-align:center;top:808px;color:#000;transform:scaleX(0.9849);transform-origin:center 0">Car MCO; 15/09/2018</div><div class="a" style="left:778px;top:806px;width:95px;height:17px;background:#d4d0c8"></div><div class="a" style="left:873px;top:806px;width:1px;height:17px;background:#8c8c8c"></div><div class="t" style="left:778px;width:95px;text-align:center;top:808px;color:#000;transform:scaleX(0.9135);transform-origin:center 0">Financial Summary</div><div class="a" style="left:213px;top:823px;width:1374px;height:2px;background:#a6caf0"></div><div class="a" style="left:212px;top:825px;width:1375px;height:1px;background:#707070"></div><div class="t " style="left:760px;top:832px;;transform:scaleX(0.9797);transform-origin:left 0;">User: 415 - Hema Yoganathan</div><div class="t " style="left:916px;top:832px;;transform:scaleX(0.9667);transform-origin:left 0;">Retailer: 'Ocean-Florida'</div><div class="t " style="left:1042px;top:832px;;transform:scaleX(0.9878);transform-origin:left 0;">Client: none</div><div class="t " style="left:1539px;top:832px;;transform:scaleX(0.9449);transform-origin:left 0;">19:36 GMT</div><div class="a" style="left:0px;top:857px;width:1587px;height:1px;background:#e4e0d8"></div><div class="a" style="left:0px;top:858px;width:1587px;height:1px;background:#808080"></div><div class="a" style="left:0px;top:859px;width:1587px;height:1px;background:#404040"></div><div class="a" style="left:0px;top:860px;width:1587px;height:39px;background:#d4d0c8"></div><div class="a" style="left:2px;top:860px;width:52px;height:38px;background:#d4d0c8;border-top:1px solid #fff;border-left:1px solid #fff;border-right:1px solid #404040;border-bottom:1px solid #404040;box-shadow:inset -1px -1px #808080"></div><svg class="a" style="left:4px;top:871px" width="16" height="15" viewBox="0 0 16 15"><path d="M1 3 Q4 1 7 2.5 L6 7 Q3 6 0 7.5Z" fill="#f04a20"/><path d="M8 2.5 Q11 4 15 2 L14 7 Q11 8.5 7 7Z" fill="#60b030"/><path d="M0 8.5 Q3 7 6 8 L5 13 Q2 12 -0.5 13.5Z" fill="#2a7ad8"/><path d="M7 8 Q10 9.5 14 8 L13 13 Q10 14 6 13Z" fill="#f8c020"/></svg><div class="t b" style="left:20px;top:873px;;letter-spacing:0.887px;">Start</div><div class="a" style="left:63px;top:860px;width:160px;height:38px;background:#fff;border-top:1px solid #404040;border-left:1px solid #404040;border-right:1px solid #fff;border-bottom:1px solid #fff;box-shadow:inset 1px 1px #808080"></div><svg class="a" style="left:68px;top:868px" width="30" height="22" viewBox="0 0 30 22"><defs><linearGradient id="tk" x1="0.15" y1="0.1" x2="0.9" y2="0.9"><stop offset="0" stop-color="#ffe860"/><stop offset="0.45" stop-color="#f4a818"/><stop offset="1" stop-color="#b83c0c"/></linearGradient></defs><path d="M1 9.5 Q1 4 5 1.5 Q9 0.3 14 1.8 L28 5.5 L29.5 9 Q23 15 16.5 21 Q8 15.5 1 9.5Z" fill="url(#tk)"/></svg><div class="t b" style="left:103px;top:873px;;letter-spacing:0.543px;">Interactive - Ocea...</div><div class="a" style="left:1408px;top:860px;width:179px;height:38px;background:#d4d0c8;border-top:1px solid #808080;border-left:1px solid #808080;border-bottom:1px solid #fff"></div><svg class="a" style="left:1415px;top:871px" width="17" height="17" viewBox="0 0 17 17"><path d="M1 1h7v7H1z" fill="#f08a20"/><path d="M8 1h8v7H8z" fill="#2a88c8"/><path d="M1 8h7v8H1z" fill="#3aa040"/><path d="M8 8h8v8H8z" fill="#e03020"/><path d="M6 2 L9 9 L4 9Z" fill="#f8d040"/></svg><svg class="a" style="left:1439px;top:874px" width="17" height="11" viewBox="0 0 17 11"><rect x="0.5" y="1.5" width="13" height="6" fill="#60c040" stroke="#2a6a20"/><rect x="3" y="8" width="8" height="2" fill="#d8c020"/><path d="M14 1 H16 M14.5 1 V10" stroke="#000" stroke-width="1.2"/><rect x="11" y="3" width="2" height="2" fill="#000"/></svg><svg class="a" style="left:1463px;top:871px" width="17" height="17" viewBox="0 0 17 17"><rect x="4.5" y="3.5" width="11" height="9" fill="#c8c8c8" stroke="#909090"/><rect x="7" y="13" width="6" height="2" fill="#c0c0c0"/><path d="M2 1v15M5 1v4" stroke="#808080" stroke-width="1.2"/><path d="M1 1h5v3H1z" fill="none" stroke="#808080"/></svg><svg class="a" style="left:1487px;top:871px" width="17" height="17" viewBox="0 0 17 17"><path d="M1 6h3l5-4v12L4 10H1z" fill="#e8e8e8" stroke="#909090"/><circle cx="11.5" cy="11.5" r="4.5" fill="#e02020"/><path d="M9.5 9.5l4 4M13.5 9.5l-4 4" stroke="#fff" stroke-width="1.4"/></svg><div class="t " style="left:1532px;top:865px;;letter-spacing:0.094px;">19:36</div><div class="t " style="left:1517px;top:881px;;letter-spacing:0.094px;">16/05/2017</div><div class="a" style="left:1580px;top:874px;width:7px;height:13px;background:#2a5ab0;border:1px solid #6a8ac0"></div></body></html>
